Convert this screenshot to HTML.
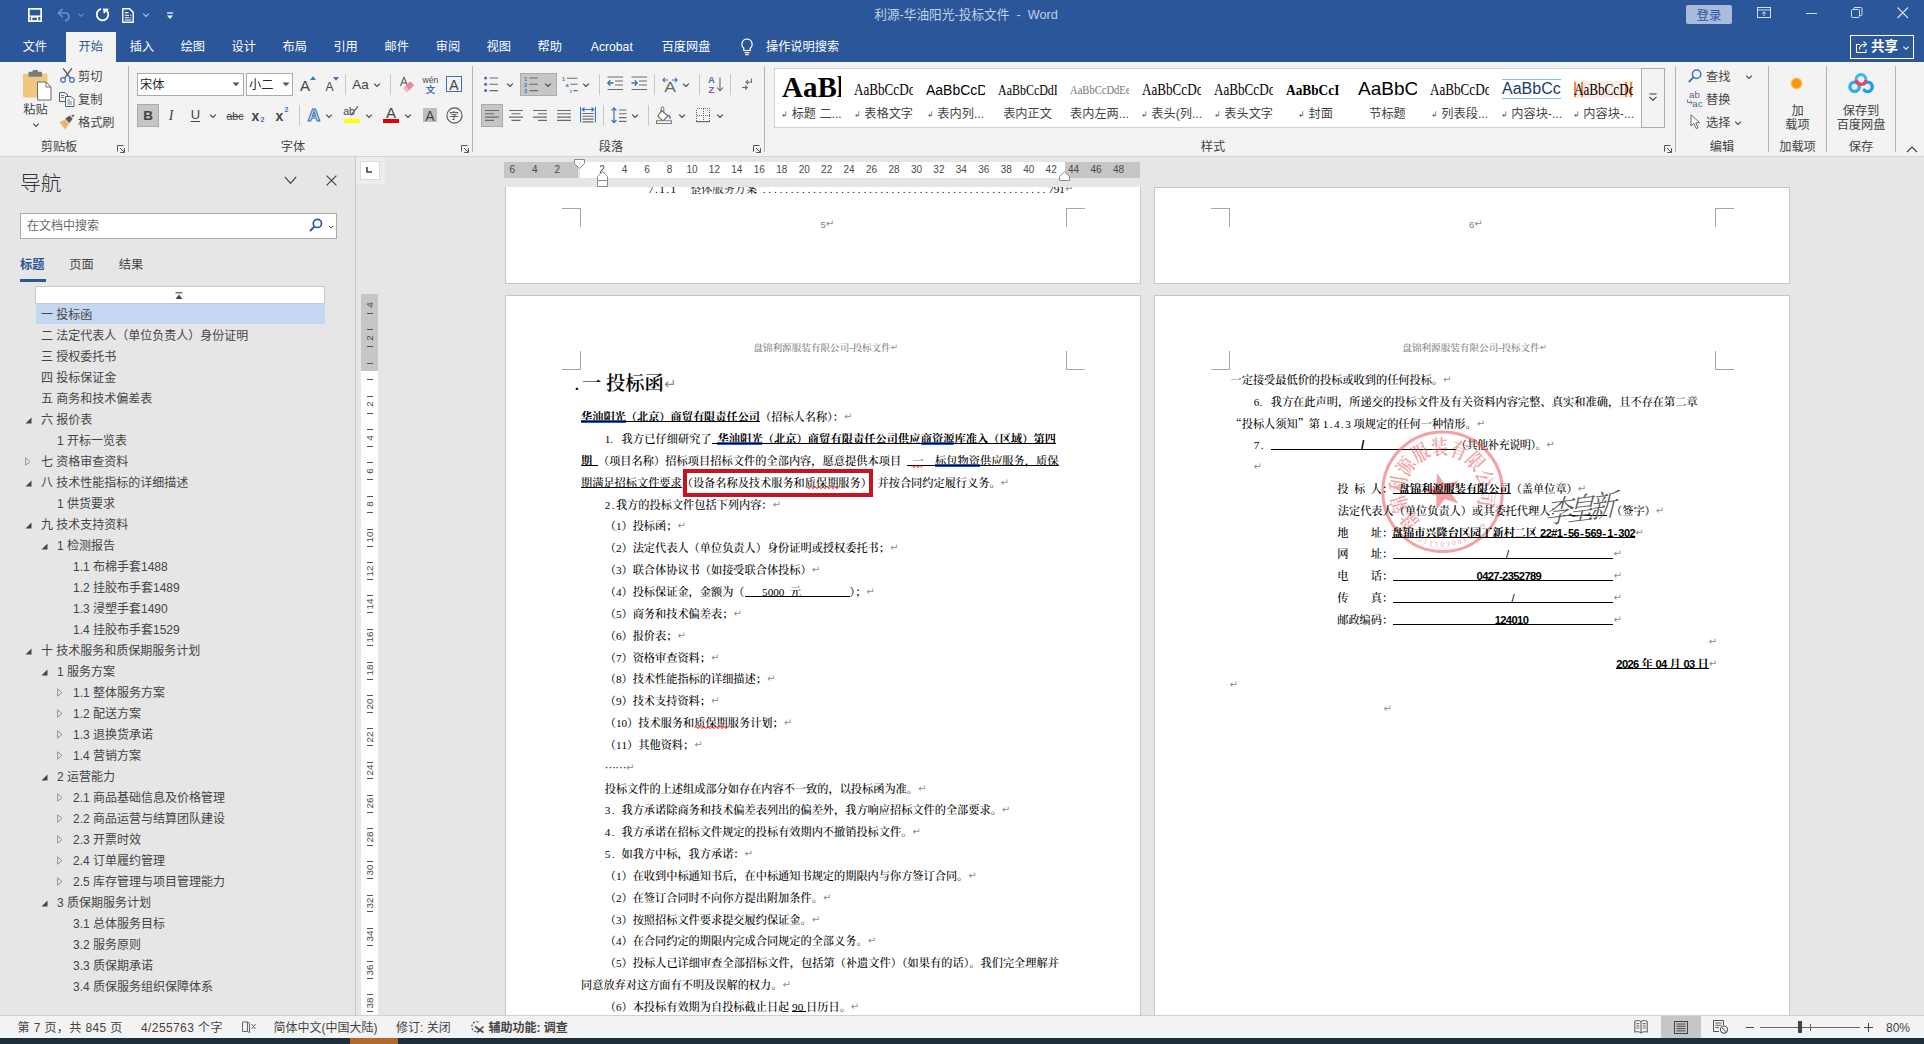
<!DOCTYPE html><html lang="zh-CN"><head><meta charset="utf-8"><title>Word</title><style>html,body{margin:0;padding:0}body{width:1924px;height:1044px;position:relative;overflow:hidden;background:#E6E6E6;font-family:"Liberation Sans","Noto Sans CJK SC",sans-serif;font-size:12px;color:#262626}div,svg,span.a{position:absolute}svg{overflow:visible}b{font-weight:700}.d{font-family:"Liberation Serif","Noto Serif CJK SC",serif}.u{background:linear-gradient(#000,#000) 0 10.2px/100% 1px no-repeat}.m{color:#8c8c8c;font-family:"DejaVu Sans",sans-serif;font-size:10px;letter-spacing:0;position:relative;top:-1.2px}</style></head><body><style>.uf{display:inline-block;box-sizing:border-box;height:16px;vertical-align:top;background:linear-gradient(#000,#000) 0 12px/100% 1px no-repeat}i{display:inline-block;width:5.6px;text-align:center;font-style:normal}</style>
<div style="left:0px;top:0px;width:1924px;height:62px;background:#2B579A;"></div>
<svg style="left:28px;top:7.8px;" width="14" height="14" viewBox="0 0 14 14"><rect x="0.85" y="0.85" width="12.3" height="12.3" fill="none" stroke="#FFFFFF" stroke-width="1.7"/><path d="M0.85 8.2 H13.15" stroke="#FFFFFF" stroke-width="1.5"/><rect x="3.6" y="8.9" width="6" height="4.3" fill="none" stroke="#FFFFFF" stroke-width="1.5"/></svg>
<svg style="left:56.5px;top:8px;" width="16" height="14" viewBox="0 0 16 14"><path d="M1.4 5 H9 A3.9 3.9 0 0 1 9 12.6 H8 M5.6 0.8 L1.4 5 L5.6 9.2" fill="none" stroke="#6E8DC0" stroke-width="1.7"/></svg>
<svg style="left:75.5px;top:10.5px;" width="10" height="8" viewBox="0 0 10 8"><path d="M2.4 2.7 L5 5.3 L7.6 2.7" fill="none" stroke="#6E8DC0" stroke-width="1.1"/></svg>
<svg style="left:95px;top:7px;" width="16" height="16" viewBox="0 0 16 16"><path d="M6.1 1.8 A5.8 5.8 0 1 0 11.6 3.3" fill="none" stroke="#FFFFFF" stroke-width="1.8"/><path d="M8.0 1.4 L14.0 1.8 L8.8 6.9 Z" fill="#FFFFFF"/></svg>
<svg style="left:121.5px;top:7.5px;" width="12" height="15" viewBox="0 0 12 15"><path d="M0.8 0.8 H7.6 L11.2 4.4 V14.2 H0.8 Z" fill="none" stroke="#FFFFFF" stroke-width="1.4"/><path d="M2.8 4.6 H6.4 M2.8 7.2 H7 M2.8 9.8 H7 M8.2 7.2 H9.4 M8.2 9.8 H9.4 M2.8 12 H9.4" stroke="#FFFFFF" stroke-width="1.1"/></svg>
<svg style="left:140.5px;top:10.5px;" width="10" height="8" viewBox="0 0 10 8"><path d="M2.2 2.6 L5 5.4 L7.8 2.6" fill="none" stroke="#B9C7E2" stroke-width="1.1"/></svg>
<svg style="left:166.5px;top:11.5px;" width="6" height="8" viewBox="0 0 6 8"><path d="M0 1 H6" stroke="#FFFFFF" stroke-width="1.2"/><path d="M0 3.6 H6 L3 7 Z" fill="#FFFFFF"/></svg>
<div style="top:4.50px;height:20px;line-height:20px;font-size:12.7px;color:#C4D0E6;white-space:pre;left:766px;width:400px;text-align:center;">利源-华油阳光-投标文件  -  Word</div>
<div style="left:1686px;top:5px;width:46px;height:19px;background:#A9BCDD;border-radius:2px;"></div>
<div style="top:5.60px;height:20px;line-height:20px;font-size:12.5px;color:#2B579A;white-space:pre;left:1509px;width:400px;text-align:center;">登录</div>
<svg style="left:1757px;top:7px;" width="14" height="12" viewBox="0 0 14 12"><rect x="0.5" y="0.5" width="13" height="10" fill="none" stroke="#D5DEEE" stroke-width="1"/><path d="M0.5 3 H13.5" stroke="#D5DEEE" stroke-width="1"/><path d="M7 9 V5 M5 6.8 L7 4.8 L9 6.8" fill="none" stroke="#D5DEEE" stroke-width="1"/></svg>
<div style="left:1806px;top:13px;width:11px;height:1px;background:#D5DEEE;"></div>
<svg style="left:1851px;top:7px;" width="12" height="12" viewBox="0 0 12 12"><rect x="0.5" y="2.5" width="8" height="8" rx="1.2" fill="none" stroke="#D5DEEE" stroke-width="1"/><path d="M2.8 2.5 V1.6 A1.1 1.1 0 0 1 3.9 0.5 H9.9 A1.1 1.1 0 0 1 11 1.6 V7.6 A1.1 1.1 0 0 1 9.9 8.7 H8.8" fill="none" stroke="#D5DEEE" stroke-width="1"/></svg>
<svg style="left:1897px;top:7px;" width="12" height="12" viewBox="0 0 12 12"><path d="M0.5 0.5 L11 11 M11 0.5 L0.5 11" stroke="#D5DEEE" stroke-width="1.1"/></svg>
<div style="left:66px;top:32px;width:50px;height:30px;background:#F3F3F3;"></div>
<div style="top:37.00px;height:20px;line-height:20px;font-size:12.2px;color:#FFFFFF;white-space:pre;left:-165.2px;width:400px;text-align:center;">文件</div>
<div style="top:37.00px;height:20px;line-height:20px;font-size:12.2px;color:#2B579A;white-space:pre;left:-109.3px;width:400px;text-align:center;">开始</div>
<div style="top:37.00px;height:20px;line-height:20px;font-size:12.2px;color:#FFFFFF;white-space:pre;left:-58.099999999999994px;width:400px;text-align:center;">插入</div>
<div style="top:37.00px;height:20px;line-height:20px;font-size:12.2px;color:#FFFFFF;white-space:pre;left:-7.199999999999989px;width:400px;text-align:center;">绘图</div>
<div style="top:37.00px;height:20px;line-height:20px;font-size:12.2px;color:#FFFFFF;white-space:pre;left:43.69999999999999px;width:400px;text-align:center;">设计</div>
<div style="top:37.00px;height:20px;line-height:20px;font-size:12.2px;color:#FFFFFF;white-space:pre;left:94.69999999999999px;width:400px;text-align:center;">布局</div>
<div style="top:37.00px;height:20px;line-height:20px;font-size:12.2px;color:#FFFFFF;white-space:pre;left:145.60000000000002px;width:400px;text-align:center;">引用</div>
<div style="top:37.00px;height:20px;line-height:20px;font-size:12.2px;color:#FFFFFF;white-space:pre;left:196.7px;width:400px;text-align:center;">邮件</div>
<div style="top:37.00px;height:20px;line-height:20px;font-size:12.2px;color:#FFFFFF;white-space:pre;left:247.89999999999998px;width:400px;text-align:center;">审阅</div>
<div style="top:37.00px;height:20px;line-height:20px;font-size:12.2px;color:#FFFFFF;white-space:pre;left:298.7px;width:400px;text-align:center;">视图</div>
<div style="top:37.00px;height:20px;line-height:20px;font-size:12.2px;color:#FFFFFF;white-space:pre;left:349.70000000000005px;width:400px;text-align:center;">帮助</div>
<div style="top:37.00px;height:20px;line-height:20px;font-size:12.2px;color:#FFFFFF;white-space:pre;left:411.79999999999995px;width:400px;text-align:center;">Acrobat</div>
<div style="top:37.00px;height:20px;line-height:20px;font-size:12.2px;color:#FFFFFF;white-space:pre;left:486px;width:400px;text-align:center;">百度网盘</div>
<svg style="left:740px;top:38px;" width="14" height="18" viewBox="0 0 14 18"><path d="M7 1 A5.2 5.2 0 0 1 10.2 10.2 V12.5 H3.8 V10.2 A5.2 5.2 0 0 1 7 1 Z" fill="none" stroke="#FFFFFF" stroke-width="1.2"/><path d="M4.5 14.6 H9.5 M5.3 16.6 H8.7" stroke="#FFFFFF" stroke-width="1.1"/></svg>
<div style="top:37.00px;height:20px;line-height:20px;font-size:12.2px;color:#FFFFFF;white-space:pre;left:766px;">操作说明搜索</div>
<div style="left:1850px;top:35px;width:64px;height:24px;border:1px solid #FFFFFF;box-sizing:border-box;"></div>
<svg style="left:1855px;top:40px;" width="14" height="14" viewBox="0 0 14 14"><path d="M5 4.5 H1.5 V12.5 H11 V9.5" fill="none" stroke="#FFF" stroke-width="1.1"/><path d="M4.5 9.5 C4.5 6 7 4.2 10.5 4.2 M8.5 1.5 L11.5 4.2 L8.5 7" fill="none" stroke="#FFF" stroke-width="1.1"/></svg>
<div style="top:36.50px;height:20px;line-height:20px;font-size:13.5px;color:#FFFFFF;white-space:pre;left:1871px;font-weight:700;">共享</div>
<svg style="left:1901px;top:43.5px;" width="10" height="8" viewBox="0 0 10 8"><path d="M2.4 2.7 L5 5.3 L7.6 2.7" fill="none" stroke="#FFFFFF" stroke-width="1.1"/></svg>
<div style="left:0px;top:62px;width:1924px;height:94px;background:#F3F3F3;"></div>
<div style="left:0px;top:156px;width:1924px;height:1px;background:#D4D4D4;"></div>
<svg style="left:23px;top:70px;" width="29" height="31" viewBox="0 0 29 31"><rect x="0" y="3.5" width="24.5" height="24" rx="1.5" fill="#EFC77F"/><rect x="5.5" y="1.8" width="13.5" height="5" rx="1" fill="#7A7A7A"/><rect x="9.5" y="0" width="5.5" height="3.5" rx="1.2" fill="#7A7A7A"/><path d="M14.5 12 H23 L28 17 V30 H14.5 Z" fill="#FFFFFF" stroke="#6A6A6A" stroke-width="1"/><path d="M23 12 V17 H28" fill="none" stroke="#6A6A6A" stroke-width="1"/></svg>
<div style="top:99.50px;height:20px;line-height:20px;font-size:12.2px;color:#444444;white-space:pre;left:-164.5px;width:400px;text-align:center;">粘贴</div>
<svg style="left:31px;top:120.5px;" width="10" height="8" viewBox="0 0 10 8"><path d="M2.2 2.6 L5 5.4 L7.8 2.6" fill="none" stroke="#444444" stroke-width="1.1"/></svg>
<svg style="left:60px;top:68px;" width="15" height="15" viewBox="0 0 15 15"><path d="M3.2 0.5 L10.6 10.4 M11.8 0.5 L4.4 10.4" stroke="#5A5A5A" stroke-width="1.3" fill="none"/><circle cx="3" cy="12" r="2.3" fill="none" stroke="#3B73B9" stroke-width="1.2"/><circle cx="12" cy="12" r="2.3" fill="none" stroke="#3B73B9" stroke-width="1.2"/></svg>
<div style="top:67.20px;height:20px;line-height:20px;font-size:12.2px;color:#444444;white-space:pre;left:78px;">剪切</div>
<svg style="left:59px;top:92px;" width="16" height="15" viewBox="0 0 16 15"><path d="M0.5 0.5 H6 L8.5 3 V9.5 H0.5 Z" fill="#F3F3F3" stroke="#5A5A5A" stroke-width="1"/><path d="M2 3.5 H5 M2 5.5 H5" stroke="#3B73B9" stroke-width="0.9"/><path d="M6.5 4.5 H12 L15 7.5 V14.5 H6.5 Z" fill="#FFFFFF" stroke="#5A5A5A" stroke-width="1"/><path d="M8.3 8 H11 M8.3 10 H13 M8.3 12 H13" stroke="#3B73B9" stroke-width="0.9"/></svg>
<div style="top:90.40px;height:20px;line-height:20px;font-size:12.2px;color:#444444;white-space:pre;left:78px;">复制</div>
<svg style="left:59px;top:114px;" width="17" height="16" viewBox="0 0 17 16"><path d="M0.5 8.2 L6.2 5.2 L10 10 L6 15.5 Z" fill="#E8B86A"/><path d="M6.3 4.6 L10.8 1.6 L13.6 5 L10.2 9.2 Z" fill="#5A5A5A"/><path d="M12.2 1.2 L15.4 0.4 L14.2 3.4 Z" fill="#5A5A5A"/></svg>
<div style="top:113.10px;height:20px;line-height:20px;font-size:12.2px;color:#444444;white-space:pre;left:78px;">格式刷</div>
<div style="top:136.60px;height:20px;line-height:20px;font-size:12.2px;color:#444444;white-space:pre;left:-141px;width:400px;text-align:center;">剪贴板</div>
<svg style="left:117px;top:144.5px;" width="8" height="8" viewBox="0 0 8 8"><path d="M0.5 6.5 V0.5 H6.5 M3 3 L7.4 7.4 M7.5 3.2 V7.5 H3.2" fill="none" stroke="#555" stroke-width="1"/></svg>
<div style="left:128px;top:66px;width:1px;height:86px;background:#B4B4B4;"></div>
<div style="left:137px;top:73px;width:107px;height:23px;background:#FFFFFF;border:1px solid #ABABAB;box-sizing:border-box;"></div>
<div style="top:74.80px;height:20px;line-height:20px;font-size:12.2px;color:#262626;white-space:pre;left:140px;">宋体</div>
<svg style="left:232px;top:82px;" width="8" height="5" viewBox="0 0 8 5"><path d="M0.5 0.5 H7.5 L4 4.2 Z" fill="#555"/></svg>
<div style="left:246px;top:73px;width:47px;height:23px;background:#FFFFFF;border:1px solid #ABABAB;box-sizing:border-box;"></div>
<div style="top:74.80px;height:20px;line-height:20px;font-size:12.2px;color:#262626;white-space:pre;left:249px;">小二</div>
<svg style="left:282px;top:82px;" width="8" height="5" viewBox="0 0 8 5"><path d="M0.5 0.5 H7.5 L4 4.2 Z" fill="#555"/></svg>
<div style="top:75.50px;height:20px;line-height:20px;font-size:15px;color:#444444;white-space:pre;left:105px;width:400px;text-align:center;">A</div>
<svg style="left:310px;top:76px;" width="6" height="4" viewBox="0 0 6 4"><path d="M0 4 L3 0.3 L6 4 Z" fill="#3B73B9"/></svg>
<div style="top:76.50px;height:20px;line-height:20px;font-size:12px;color:#444444;white-space:pre;left:129.5px;width:400px;text-align:center;">A</div>
<svg style="left:333px;top:77px;" width="6" height="4" viewBox="0 0 6 4"><path d="M0 0 L3 3.7 L6 0 Z" fill="#3B73B9"/></svg>
<div style="left:345px;top:74px;width:1px;height:21px;background:#C8C8C8;"></div>
<div style="top:74.50px;height:20px;line-height:20px;font-size:13.5px;color:#444444;white-space:pre;left:160.5px;width:400px;text-align:center;">Aa</div>
<svg style="left:371.5px;top:81px;" width="10" height="8" viewBox="0 0 10 8"><path d="M2.2 2.6 L5 5.4 L7.8 2.6" fill="none" stroke="#444444" stroke-width="1.1"/></svg>
<div style="left:390px;top:74px;width:1px;height:21px;background:#C8C8C8;"></div>
<svg style="left:398px;top:75px;" width="18" height="18" viewBox="0 0 18 18"><path d="M6 2 L2.5 11 M6 2 L9.5 11 M3.8 7.8 H8.2" fill="none" stroke="#6A6A6A" stroke-width="1.2"/><path d="M7.2 11.2 L12.2 6.2 L16.2 10.2 L11.2 15.2 Z" fill="#E98A9C"/><path d="M5 13.4 L7.2 11.2 L11.2 15.2 L9 17.4 Z" fill="#F2B3BE"/></svg>
<div style="top:73.80px;height:12px;line-height:12px;font-size:8.6px;color:#444444;white-space:pre;left:230.5px;width:400px;text-align:center;">wén</div>
<div style="top:83.50px;height:12px;line-height:12px;font-size:9.5px;color:#3B73B9;white-space:pre;left:230.5px;width:400px;text-align:center;font-weight:700;">文</div>
<div style="left:446px;top:76px;width:16px;height:16px;border:1px solid #3B73B9;box-sizing:border-box;"></div>
<div style="top:74.50px;height:20px;line-height:20px;font-size:14px;color:#444444;white-space:pre;left:254px;width:400px;text-align:center;">A</div>
<div style="left:137px;top:104px;width:22px;height:23px;background:#C6C6C6;border:1px solid #ABABAB;box-sizing:border-box;"></div>
<div style="top:105.50px;height:20px;line-height:20px;font-size:13.5px;color:#444444;white-space:pre;left:-52px;width:400px;text-align:center;font-weight:700;">B</div>
<div style="top:105.50px;height:20px;line-height:20px;font-size:14px;color:#444444;white-space:pre;font-family:'Liberation Serif',serif;left:-29px;width:400px;text-align:center;font-style:italic;">I</div>
<div style="top:105.00px;height:20px;line-height:20px;font-size:13px;color:#444444;white-space:pre;left:-4.599999999999994px;width:400px;text-align:center;text-decoration:underline;text-underline-offset:2px;">U</div>
<svg style="left:208.3px;top:112px;" width="10" height="8" viewBox="0 0 10 8"><path d="M2.2 2.6 L5 5.4 L7.8 2.6" fill="none" stroke="#444444" stroke-width="1.1"/></svg>
<div style="top:106.00px;height:20px;line-height:20px;font-size:10.5px;color:#444444;white-space:pre;left:35px;width:400px;text-align:center;text-decoration:line-through;">abc</div>
<div style="top:105.50px;height:20px;line-height:20px;font-size:14px;color:#444444;white-space:pre;left:55.5px;width:400px;text-align:center;font-weight:700;">x</div>
<div style="top:110.00px;height:20px;line-height:20px;font-size:7px;color:#3B73B9;white-space:pre;left:62.5px;width:400px;text-align:center;font-weight:700;">2</div>
<div style="top:105.50px;height:20px;line-height:20px;font-size:14px;color:#444444;white-space:pre;left:79.5px;width:400px;text-align:center;font-weight:700;">x</div>
<div style="top:100.00px;height:20px;line-height:20px;font-size:7px;color:#3B73B9;white-space:pre;left:86.5px;width:400px;text-align:center;font-weight:700;">2</div>
<div style="left:299px;top:105px;width:1px;height:21px;background:#C8C8C8;"></div>
<div style="top:105.50px;height:20px;line-height:20px;font-size:17px;color:#FFFFFF;white-space:pre;left:113.80000000000001px;width:400px;text-align:center;-webkit-text-stroke:1.2px #3B73B9;font-weight:700;">A</div>
<svg style="left:324.4px;top:112px;" width="10" height="8" viewBox="0 0 10 8"><path d="M2.2 2.6 L5 5.4 L7.8 2.6" fill="none" stroke="#444444" stroke-width="1.1"/></svg>
<div style="top:104.50px;height:12px;line-height:12px;font-size:10.5px;color:#444444;white-space:pre;left:149px;width:400px;text-align:center;">ab</div>
<svg style="left:349px;top:106px;" width="11" height="12" viewBox="0 0 11 12"><path d="M9.5 0.8 L3.6 8.2 L1.6 10.4 L2.4 7.4 L8.3 0 Z" fill="#6A6A6A"/></svg>
<div style="left:344px;top:119px;width:16px;height:4px;background:#FFFF00;"></div>
<svg style="left:364.3px;top:112px;" width="10" height="8" viewBox="0 0 10 8"><path d="M2.2 2.6 L5 5.4 L7.8 2.6" fill="none" stroke="#444444" stroke-width="1.1"/></svg>
<div style="top:102.50px;height:20px;line-height:20px;font-size:15px;color:#444444;white-space:pre;left:191px;width:400px;text-align:center;">A</div>
<div style="left:383px;top:119px;width:16px;height:4px;background:#E60000;"></div>
<svg style="left:403.4px;top:112px;" width="10" height="8" viewBox="0 0 10 8"><path d="M2.2 2.6 L5 5.4 L7.8 2.6" fill="none" stroke="#444444" stroke-width="1.1"/></svg>
<div style="left:423px;top:108px;width:14px;height:14px;background:#BFBFBF;"></div>
<div style="top:105.50px;height:20px;line-height:20px;font-size:14px;color:#444444;white-space:pre;left:230px;width:400px;text-align:center;">A</div>
<svg style="left:445.5px;top:107px;" width="17" height="17" viewBox="0 0 17 17"><circle cx="8.5" cy="8.5" r="7.6" fill="none" stroke="#555" stroke-width="1.1"/></svg>
<div style="top:105.50px;height:20px;line-height:20px;font-size:9.5px;color:#444444;white-space:pre;left:254px;width:400px;text-align:center;">字</div>
<div style="top:136.60px;height:20px;line-height:20px;font-size:12.2px;color:#444444;white-space:pre;left:93px;width:400px;text-align:center;">字体</div>
<svg style="left:461px;top:144.5px;" width="8" height="8" viewBox="0 0 8 8"><path d="M0.5 6.5 V0.5 H6.5 M3 3 L7.4 7.4 M7.5 3.2 V7.5 H3.2" fill="none" stroke="#555" stroke-width="1"/></svg>
<div style="left:472px;top:66px;width:1px;height:86px;background:#B4B4B4;"></div>
<svg style="left:484px;top:76px;" width="15" height="17" viewBox="0 0 15 17"><circle cx="1.6" cy="2" r="1.5" fill="#3B73B9"/><circle cx="1.6" cy="8.3" r="1.5" fill="#3B73B9"/><circle cx="1.6" cy="14.6" r="1.5" fill="#3B73B9"/><path d="M5.5 2 H14 M5.5 8.3 H14 M5.5 14.6 H14" stroke="#6A6A6A" stroke-width="1.1"/></svg>
<svg style="left:504.5px;top:81px;" width="10" height="8" viewBox="0 0 10 8"><path d="M2.2 2.6 L5 5.4 L7.8 2.6" fill="none" stroke="#444444" stroke-width="1.1"/></svg>
<div style="left:520px;top:73px;width:37px;height:23px;background:#C6C6C6;border:1px solid #ABABAB;box-sizing:border-box;"></div>
<svg style="left:524px;top:76px;" width="15" height="17" viewBox="0 0 15 17"><path d="M5.5 2 H14 M5.5 8.3 H14 M5.5 14.6 H14" stroke="#6A6A6A" stroke-width="1.1"/><text x="0" y="4.5" font-size="5.5" font-weight="700" fill="#3B73B9" font-family="Liberation Sans,sans-serif">1</text><text x="0" y="10.8" font-size="5.5" font-weight="700" fill="#3B73B9" font-family="Liberation Sans,sans-serif">2</text><text x="0" y="17" font-size="5.5" font-weight="700" fill="#3B73B9" font-family="Liberation Sans,sans-serif">3</text></svg>
<svg style="left:543.3px;top:81px;" width="10" height="8" viewBox="0 0 10 8"><path d="M2.2 2.6 L5 5.4 L7.8 2.6" fill="none" stroke="#444444" stroke-width="1.1"/></svg>
<svg style="left:562px;top:76px;" width="17" height="17" viewBox="0 0 17 17"><path d="M5 2.2 H15.5 M8.5 8.3 H15.5 M11.5 14.6 H15.5" stroke="#6A6A6A" stroke-width="1.1"/><text x="0" y="4.5" font-size="5.5" font-weight="700" fill="#3B73B9" font-family="Liberation Sans,sans-serif">1</text><text x="3.5" y="10.6" font-size="5.5" font-weight="700" fill="#3B73B9" font-family="Liberation Sans,sans-serif">a</text><text x="8" y="17" font-size="5.5" font-weight="700" fill="#3B73B9" font-family="Liberation Sans,sans-serif">i</text></svg>
<svg style="left:580.6px;top:81px;" width="10" height="8" viewBox="0 0 10 8"><path d="M2.2 2.6 L5 5.4 L7.8 2.6" fill="none" stroke="#444444" stroke-width="1.1"/></svg>
<div style="left:599px;top:74px;width:1px;height:21px;background:#C8C8C8;"></div>
<svg style="left:607px;top:76px;" width="17" height="15" viewBox="0 0 17 15"><path d="M0.5 1 H16 M8 5 H16 M8 9 H16 M0.5 13.5 H16" stroke="#6A6A6A" stroke-width="1.1"/><path d="M6.5 7 H0.8 M3.3 4.3 L0.8 7 L3.3 9.7" fill="none" stroke="#3B73B9" stroke-width="1.3"/></svg>
<svg style="left:631px;top:76px;" width="17" height="15" viewBox="0 0 17 15"><path d="M0.5 1 H16 M8 5 H16 M8 9 H16 M0.5 13.5 H16" stroke="#6A6A6A" stroke-width="1.1"/><path d="M0.5 7 H6.2 M3.7 4.3 L6.2 7 L3.7 9.7" fill="none" stroke="#3B73B9" stroke-width="1.3"/></svg>
<div style="left:654px;top:74px;width:1px;height:21px;background:#C8C8C8;"></div>
<div style="top:77.00px;height:20px;line-height:20px;font-size:14px;color:#6A6A6A;white-space:pre;left:469.79999999999995px;width:400px;text-align:center;transform:scaleX(1.25);">A</div>
<svg style="left:662px;top:77px;" width="16" height="6" viewBox="0 0 16 6"><path d="M1 3 H6 M3 0.8 L0.8 3 L3 5.2 M10 3 H15 M13 0.8 L15.2 3 L13 5.2" fill="none" stroke="#3B73B9" stroke-width="1.1"/></svg>
<svg style="left:680.6px;top:81px;" width="10" height="8" viewBox="0 0 10 8"><path d="M2.2 2.6 L5 5.4 L7.8 2.6" fill="none" stroke="#444444" stroke-width="1.1"/></svg>
<div style="left:699px;top:74px;width:1px;height:21px;background:#C8C8C8;"></div>
<div style="top:75.00px;height:10px;line-height:10px;font-size:9.5px;color:#3B73B9;white-space:pre;left:511.5px;width:400px;text-align:center;font-weight:700;">A</div>
<div style="top:84.50px;height:10px;line-height:10px;font-size:9.5px;color:#9B4DB8;white-space:pre;left:511.5px;width:400px;text-align:center;font-weight:700;">Z</div>
<svg style="left:716px;top:77px;" width="8" height="15" viewBox="0 0 8 15"><path d="M4 0.5 V13.5 M1 10.5 L4 13.8 L7 10.5" fill="none" stroke="#6A6A6A" stroke-width="1.1"/></svg>
<div style="left:730px;top:74px;width:1px;height:21px;background:#C8C8C8;"></div>
<svg style="left:741px;top:78px;" width="12" height="13" viewBox="0 0 12 13"><path d="M10.5 0.5 V4.2 H5 M7 2.2 L5 4.2 L7 6.2" fill="none" stroke="#6A6A6A" stroke-width="1.1"/><path d="M1 9.5 H6 M4.2 7.5 L6.2 9.5 L4.2 11.5" fill="none" stroke="#6A6A6A" stroke-width="1.1"/></svg>
<div style="left:481px;top:104px;width:22px;height:23px;background:#C6C6C6;border:1px solid #ABABAB;box-sizing:border-box;"></div>
<svg style="left:485px;top:110px;" width="16" height="12" viewBox="0 0 16 12"><path d="M0 0.5 H14 M0 3.8 H9 M0 7.1 H14 M0 10.4 H9 " stroke="#6A6A6A" stroke-width="1.1"/></svg>
<svg style="left:509px;top:110px;" width="16" height="12" viewBox="0 0 16 12"><path d="M0 0.5 H14 M2.5 3.8 H11.5 M0 7.1 H14 M2.5 10.4 H11.5 " stroke="#6A6A6A" stroke-width="1.1"/></svg>
<svg style="left:533px;top:110px;" width="16" height="12" viewBox="0 0 16 12"><path d="M0 0.5 H14 M5 3.8 H14 M0 7.1 H14 M5 10.4 H14 " stroke="#6A6A6A" stroke-width="1.1"/></svg>
<svg style="left:557px;top:110px;" width="16" height="12" viewBox="0 0 16 12"><path d="M0 0.5 H14 M0 3.8 H14 M0 7.1 H14 M0 10.4 H14 " stroke="#6A6A6A" stroke-width="1.1"/></svg>
<svg style="left:580px;top:107px;" width="16" height="16" viewBox="0 0 16 16"><path d="M0.6 0 V15.5 M15.4 0 V15.5" stroke="#3B73B9" stroke-width="1.1"/><path d="M2.5 2.5 H13.5 M4.5 0.5 L2.3 2.5 L4.5 4.5 M11.5 0.5 L13.7 2.5 L11.5 4.5" fill="none" stroke="#3B73B9" stroke-width="1.1"/><path d="M2.5 6.5 H13.5 M2.5 9.3 H13.5 M2.5 12.1 H13.5 M2.5 14.9 H13.5" stroke="#6A6A6A" stroke-width="1.1"/></svg>
<div style="left:603px;top:105px;width:1px;height:21px;background:#C8C8C8;"></div>
<svg style="left:611px;top:107px;" width="16" height="17" viewBox="0 0 16 17"><path d="M3 1 V15.5 M0.6 3.6 L3 0.8 L5.4 3.6 M0.6 13 L3 15.8 L5.4 13" fill="none" stroke="#3B73B9" stroke-width="1.2"/><path d="M8 3 H15.5 M8 6.8 H15.5 M8 10.6 H15.5 M8 14.4 H15.5" stroke="#6A6A6A" stroke-width="1.1"/></svg>
<svg style="left:629.5px;top:112px;" width="10" height="8" viewBox="0 0 10 8"><path d="M2.2 2.6 L5 5.4 L7.8 2.6" fill="none" stroke="#444444" stroke-width="1.1"/></svg>
<div style="left:648px;top:105px;width:1px;height:21px;background:#C8C8C8;"></div>
<svg style="left:656px;top:107px;" width="17" height="17" viewBox="0 0 17 17"><path d="M5.5 3.5 L12 9 L7 14 L1.8 9.2 Z" fill="#FFFFFF" stroke="#6A6A6A" stroke-width="1.1"/><path d="M5.2 5.5 V1.2 A1.3 1.3 0 0 1 7.8 1.2 V4.8" fill="none" stroke="#6A6A6A" stroke-width="1"/><path d="M12.2 7.2 C14.6 8.2 15.4 10.4 14.2 12.4 C13.2 10.8 12.6 9.6 12.2 7.2 Z" fill="#3B73B9"/><rect x="0.5" y="13.8" width="15" height="2.7" fill="#FFFFFF" stroke="#6A6A6A" stroke-width="0.9"/></svg>
<svg style="left:676.5px;top:112px;" width="10" height="8" viewBox="0 0 10 8"><path d="M2.2 2.6 L5 5.4 L7.8 2.6" fill="none" stroke="#444444" stroke-width="1.1"/></svg>
<svg style="left:696px;top:108px;" width="14" height="14" viewBox="0 0 14 14"><path d="M0.5 0.5 H13.5 V13.5 H0.5 Z M7 0.5 V13.5 M0.5 7 H13.5" fill="none" stroke="#6A6A6A" stroke-width="1" stroke-dasharray="1 1" shape-rendering="crispEdges"/><path d="M0 13.6 H14" stroke="#6A6A6A" stroke-width="1.2"/></svg>
<svg style="left:715.2px;top:112px;" width="10" height="8" viewBox="0 0 10 8"><path d="M2.2 2.6 L5 5.4 L7.8 2.6" fill="none" stroke="#444444" stroke-width="1.1"/></svg>
<div style="top:136.60px;height:20px;line-height:20px;font-size:12.2px;color:#444444;white-space:pre;left:411px;width:400px;text-align:center;">段落</div>
<svg style="left:753px;top:144.5px;" width="8" height="8" viewBox="0 0 8 8"><path d="M0.5 6.5 V0.5 H6.5 M3 3 L7.4 7.4 M7.5 3.2 V7.5 H3.2" fill="none" stroke="#555" stroke-width="1"/></svg>
<div style="left:764px;top:66px;width:1px;height:86px;background:#B4B4B4;"></div>
<div style="left:774px;top:68px;width:868px;height:60px;background:#FFFFFF;border:1px solid #D0D0D0;box-sizing:border-box;"></div>
<div style="left:1641px;top:68px;width:24px;height:60px;background:#F3F3F3;border:1px solid #ABABAB;box-sizing:border-box;"></div>
<svg style="left:1648px;top:93px;" width="10" height="9" viewBox="0 0 10 9"><path d="M1.5 1 H8.5" stroke="#444444" stroke-width="1.1"/><path d="M1.5 3.8 L5 7.4 L8.5 3.8" fill="none" stroke="#444444" stroke-width="1.1"/></svg>
<div style="left:782px;top:70px;width:59px;height:34px;overflow:hidden;"><div style="left:0;top:5px;height:24px;line-height:24px;white-space:pre;transform-origin:0 50%;font-size:29px;color:#000;font-family:'Liberation Serif',serif;font-weight:700;">AaBl</div></div>
<div style="left:776px;top:103.6px;width:71px;height:20px;line-height:20px;text-align:center;white-space:pre;font-size:12.2px;color:#444444"><span style="font-size:8px;color:#555;position:relative;top:-0.5px">↲</span> 标题 二...</div>
<div style="left:854px;top:70px;width:59px;height:34px;overflow:hidden;"><div style="left:0;top:7.5px;height:24px;line-height:24px;white-space:pre;transform-origin:0 50%;font-size:16px;color:#000;font-family:'Liberation Serif','Noto Serif CJK SC',serif;transform:scaleX(.82);">AaBbCcDc</div></div>
<div style="left:848px;top:103.6px;width:71px;height:20px;line-height:20px;text-align:center;white-space:pre;font-size:12.2px;color:#444444"><span style="font-size:8px;color:#555;position:relative;top:-0.5px">↲</span> 表格文字</div>
<div style="left:926px;top:70px;width:59px;height:34px;overflow:hidden;"><div style="left:0;top:8px;height:24px;line-height:24px;white-space:pre;transform-origin:0 50%;font-size:14px;color:#000;font-family:'Liberation Sans','Noto Sans CJK SC',sans-serif;">AaBbCcD</div></div>
<div style="left:920px;top:103.6px;width:71px;height:20px;line-height:20px;text-align:center;white-space:pre;font-size:12.2px;color:#444444"><span style="font-size:8px;color:#555;position:relative;top:-0.5px">↲</span> 表内列...</div>
<div style="left:998px;top:70px;width:59px;height:34px;overflow:hidden;"><div style="left:0;top:7.5px;height:24px;line-height:24px;white-space:pre;transform-origin:0 50%;font-size:14.6px;color:#000;font-family:'Liberation Serif','Noto Serif CJK SC',serif;transform:scaleX(.82);font-weight:500;">AaBbCcDdI</div></div>
<div style="left:992px;top:103.6px;width:71px;height:20px;line-height:20px;text-align:center;white-space:pre;font-size:12.2px;color:#444444">表内正文</div>
<div style="left:1070px;top:70px;width:59px;height:34px;overflow:hidden;"><div style="left:0;top:8px;height:24px;line-height:24px;white-space:pre;transform-origin:0 50%;font-size:11.5px;color:#777;font-family:'Liberation Serif',serif;transform:scaleX(.92);">AaBbCcDdEe</div></div>
<div style="left:1064px;top:103.6px;width:71px;height:20px;line-height:20px;text-align:center;white-space:pre;font-size:12.2px;color:#444444">表内左两...</div>
<div style="left:1142px;top:70px;width:59px;height:34px;overflow:hidden;"><div style="left:0;top:7.5px;height:24px;line-height:24px;white-space:pre;transform-origin:0 50%;font-size:16px;color:#000;font-family:'Liberation Serif','Noto Serif CJK SC',serif;transform:scaleX(.82);">AaBbCcDc</div></div>
<div style="left:1136px;top:103.6px;width:71px;height:20px;line-height:20px;text-align:center;white-space:pre;font-size:12.2px;color:#444444"><span style="font-size:8px;color:#555;position:relative;top:-0.5px">↲</span> 表头(列...</div>
<div style="left:1214px;top:70px;width:59px;height:34px;overflow:hidden;"><div style="left:0;top:7.5px;height:24px;line-height:24px;white-space:pre;transform-origin:0 50%;font-size:16px;color:#000;font-family:'Liberation Serif','Noto Serif CJK SC',serif;transform:scaleX(.82);">AaBbCcDc</div></div>
<div style="left:1208px;top:103.6px;width:71px;height:20px;line-height:20px;text-align:center;white-space:pre;font-size:12.2px;color:#444444"><span style="font-size:8px;color:#555;position:relative;top:-0.5px">↲</span> 表头文字</div>
<div style="left:1286px;top:70px;width:59px;height:34px;overflow:hidden;"><div style="left:0;top:7.5px;height:24px;line-height:24px;white-space:pre;transform-origin:0 50%;font-size:15.5px;color:#000;font-family:'Liberation Serif','Noto Serif CJK SC',serif;font-weight:700;transform:scaleX(.86);">AaBbCcI</div></div>
<div style="left:1280px;top:103.6px;width:71px;height:20px;line-height:20px;text-align:center;white-space:pre;font-size:12.2px;color:#444444"><span style="font-size:8px;color:#555;position:relative;top:-0.5px">↲</span> 封面</div>
<div style="left:1358px;top:70px;width:59px;height:34px;overflow:hidden;"><div style="left:0;top:6.5px;height:24px;line-height:24px;white-space:pre;transform-origin:0 50%;font-size:19px;color:#000;font-family:'Liberation Sans','Noto Sans CJK SC',sans-serif;">AaBbC</div></div>
<div style="left:1352px;top:103.6px;width:71px;height:20px;line-height:20px;text-align:center;white-space:pre;font-size:12.2px;color:#444444">节标题</div>
<div style="left:1430px;top:70px;width:59px;height:34px;overflow:hidden;"><div style="left:0;top:7.5px;height:24px;line-height:24px;white-space:pre;transform-origin:0 50%;font-size:16px;color:#000;font-family:'Liberation Serif','Noto Serif CJK SC',serif;transform:scaleX(.82);">AaBbCcDc</div></div>
<div style="left:1424px;top:103.6px;width:71px;height:20px;line-height:20px;text-align:center;white-space:pre;font-size:12.2px;color:#444444"><span style="font-size:8px;color:#555;position:relative;top:-0.5px">↲</span> 列表段...</div>
<div style="left:1502px;top:79px;width:59px;height:1px;background:#7FC4E8;"></div>
<div style="left:1502px;top:98px;width:59px;height:1px;background:#7FC4E8;"></div>
<div style="left:1502px;top:70px;width:59px;height:34px;overflow:hidden;"><div style="left:0;top:7px;height:24px;line-height:24px;white-space:pre;transform-origin:0 50%;font-size:16px;color:#1B3A6B;font-family:'Liberation Sans','Noto Sans CJK SC',sans-serif;">AaBbCc</div></div>
<div style="left:1496px;top:103.6px;width:71px;height:20px;line-height:20px;text-align:center;white-space:pre;font-size:12.2px;color:#444444"><span style="font-size:8px;color:#555;position:relative;top:-0.5px">↲</span> 内容块-...</div>
<div style="left:1574px;top:81px;width:59px;height:17px;background:#FDECE6;"></div>
<div style="left:1574px;top:82px;width:2px;height:15px;background:#F08A4B;"></div>
<div style="left:1581px;top:82px;width:2px;height:15px;background:#F08A4B;"></div>
<div style="left:1625px;top:82px;width:2px;height:15px;background:#F08A4B;"></div>
<div style="left:1630px;top:82px;width:2px;height:15px;background:#F08A4B;"></div>
<div style="left:1574px;top:70px;width:59px;height:34px;overflow:hidden;"><div style="left:0;top:7.5px;height:24px;line-height:24px;white-space:pre;transform-origin:0 50%;font-size:16px;color:#000;font-family:'Liberation Serif','Noto Serif CJK SC',serif;transform:scaleX(.82);">AaBbCcDc</div></div>
<div style="left:1568px;top:103.6px;width:71px;height:20px;line-height:20px;text-align:center;white-space:pre;font-size:12.2px;color:#444444"><span style="font-size:8px;color:#555;position:relative;top:-0.5px">↲</span> 内容块-...</div>
<div style="top:136.60px;height:20px;line-height:20px;font-size:12.2px;color:#444444;white-space:pre;left:1013px;width:400px;text-align:center;">样式</div>
<svg style="left:1664px;top:144.5px;" width="8" height="8" viewBox="0 0 8 8"><path d="M0.5 6.5 V0.5 H6.5 M3 3 L7.4 7.4 M7.5 3.2 V7.5 H3.2" fill="none" stroke="#555" stroke-width="1"/></svg>
<div style="left:1675px;top:66px;width:1px;height:86px;background:#B4B4B4;"></div>
<svg style="left:1688px;top:69px;" width="14" height="14" viewBox="0 0 14 14"><circle cx="8.6" cy="5.2" r="4.2" fill="none" stroke="#3B73B9" stroke-width="1.5"/><path d="M5.6 8.2 L0.8 13" stroke="#3B73B9" stroke-width="1.8"/></svg>
<div style="top:67.40px;height:20px;line-height:20px;font-size:12.2px;color:#444444;white-space:pre;left:1706px;">查找</div>
<svg style="left:1743.7px;top:73px;" width="10" height="8" viewBox="0 0 10 8"><path d="M2.2 2.6 L5 5.4 L7.8 2.6" fill="none" stroke="#444444" stroke-width="1.1"/></svg>
<div style="top:90.00px;height:10px;line-height:10px;font-size:9.8px;color:#8A4FB0;white-space:pre;left:1494.5px;width:400px;text-align:center;"><span style="color:#666">a</span>b</div>
<div style="top:99.00px;height:10px;line-height:10px;font-size:9.8px;color:#3B73B9;white-space:pre;left:1497.5px;width:400px;text-align:center;"><span style="color:#666">a</span>c</div>
<svg style="left:1687px;top:99px;" width="6" height="6" viewBox="0 0 6 6"><path d="M0.6 0.5 V3.5 H5 M3.4 1.8 L5.2 3.5 L3.4 5.2" fill="none" stroke="#3B73B9" stroke-width="0.9"/></svg>
<div style="top:90.40px;height:20px;line-height:20px;font-size:12.2px;color:#444444;white-space:pre;left:1706px;">替换</div>
<svg style="left:1690px;top:114px;" width="11" height="16" viewBox="0 0 11 16"><path d="M1 0.8 L1 12 L4 9.4 L6.2 14.6 L8 13.8 L5.8 8.8 L9.6 8.6 Z" fill="#FFFFFF" stroke="#6A6A6A" stroke-width="1"/></svg>
<div style="top:113.40px;height:20px;line-height:20px;font-size:12.2px;color:#444444;white-space:pre;left:1706px;">选择</div>
<svg style="left:1733px;top:119px;" width="10" height="8" viewBox="0 0 10 8"><path d="M2.2 2.6 L5 5.4 L7.8 2.6" fill="none" stroke="#444444" stroke-width="1.1"/></svg>
<div style="top:136.60px;height:20px;line-height:20px;font-size:12.2px;color:#444444;white-space:pre;left:1522px;width:400px;text-align:center;">编辑</div>
<div style="left:1768px;top:66px;width:1px;height:86px;background:#B4B4B4;"></div>
<svg style="left:1788.4px;top:74.5px;" width="17" height="17" viewBox="0 0 17 17"><circle cx="8.5" cy="8.5" r="6.2" fill="#FF9500" opacity="0.22"/><circle cx="8.5" cy="8.5" r="5.5" fill="#FF9500" opacity="0.45"/><circle cx="8.5" cy="8.5" r="4.7" fill="#FF9500"/></svg>
<div style="top:100.60px;height:20px;line-height:20px;font-size:12.2px;color:#444444;white-space:pre;left:1597.5px;width:400px;text-align:center;">加</div>
<div style="top:115.20px;height:20px;line-height:20px;font-size:12.2px;color:#444444;white-space:pre;left:1597.5px;width:400px;text-align:center;">载项</div>
<div style="top:136.60px;height:20px;line-height:20px;font-size:12.2px;color:#444444;white-space:pre;left:1597.5px;width:400px;text-align:center;">加载项</div>
<div style="left:1826px;top:66px;width:1px;height:86px;background:#B4B4B4;"></div>
<svg style="left:1847px;top:71px;" width="28" height="24" viewBox="0 0 28 24"><circle cx="7.6" cy="15.8" r="4.7" fill="none" stroke="#2AAEF5" stroke-width="3.4"/><path d="M17.2 19.1 A4.7 4.7 0 1 0 17.0 12.8" fill="none" stroke="#1E9BF2" stroke-width="3.4" stroke-linecap="round"/><path d="M10.2 12.6 L12.4 10.6" stroke="#2AAEF5" stroke-width="3.4"/><path d="M9.15 8.5 A4.85 4.85 0 0 1 18.85 8.5" fill="none" stroke="#28BDFA" stroke-width="3.1"/><path d="M9.15 8.5 A4.85 4.85 0 0 0 18.85 8.5" fill="none" stroke="#F0405F" stroke-width="3.1"/></svg>
<div style="top:100.60px;height:20px;line-height:20px;font-size:12.2px;color:#444444;white-space:pre;left:1661px;width:400px;text-align:center;">保存到</div>
<div style="top:115.20px;height:20px;line-height:20px;font-size:12.2px;color:#444444;white-space:pre;left:1661px;width:400px;text-align:center;">百度网盘</div>
<div style="top:136.60px;height:20px;line-height:20px;font-size:12.2px;color:#444444;white-space:pre;left:1661px;width:400px;text-align:center;">保存</div>
<div style="left:1895px;top:66px;width:1px;height:86px;background:#B4B4B4;"></div>
<svg style="left:1906px;top:146px;" width="12" height="7" viewBox="0 0 12 7"><path d="M1 6 L6 1 L11 6" fill="none" stroke="#444444" stroke-width="1.2"/></svg>
<div style="left:505px;top:176px;width:636px;height:108px;background:#FFFFFF;border:1px solid #C6C6C6;box-sizing:border-box;"></div>
<div style="left:1154px;top:187px;width:636px;height:97px;background:#FFFFFF;border:1px solid #C6C6C6;box-sizing:border-box;"></div>
<div style="left:505px;top:295px;width:636px;height:730px;background:#FFFFFF;border:1px solid #C6C6C6;box-sizing:border-box;"></div>
<div style="left:1154px;top:295px;width:636px;height:730px;background:#FFFFFF;border:1px solid #C6C6C6;box-sizing:border-box;"></div>
<div style="left:356px;top:157px;width:1568px;height:30px;background:#E6E6E6;"></div>
<div style="left:356px;top:157px;width:29px;height:27px;background:#EDEDED;"></div>
<div style="left:360px;top:161px;width:20px;height:19px;background:#FFFFFF;border:1px solid #DADADA;box-sizing:border-box;"></div>
<svg style="left:366px;top:167px;" width="6" height="6" viewBox="0 0 6 6"><path d="M1 0 V5 H6" fill="none" stroke="#444" stroke-width="1.6"/></svg>
<div style="left:504px;top:162px;width:636px;height:16px;background:#FFFFFF;"></div>
<div style="left:504px;top:162px;width:74px;height:16px;background:#C6C6C6;"></div>
<div style="left:578px;top:162px;width:2px;height:16px;background:#E4E4E4;"></div>
<div style="left:1065px;top:162px;width:75px;height:16px;background:#C6C6C6;"></div>
<div style="top:164.00px;height:12px;line-height:12px;font-size:10px;color:#4A4A4A;white-space:pre;left:312.35px;width:400px;text-align:center;">6</div>
<div style="top:164.00px;height:12px;line-height:12px;font-size:10px;color:#4A4A4A;white-space:pre;left:334.80000000000007px;width:400px;text-align:center;">4</div>
<div style="top:164.00px;height:12px;line-height:12px;font-size:10px;color:#4A4A4A;white-space:pre;left:357.25px;width:400px;text-align:center;">2</div>
<div style="top:164.00px;height:12px;line-height:12px;font-size:10px;color:#4A4A4A;white-space:pre;left:402.1500000000001px;width:400px;text-align:center;">2</div>
<div style="top:164.00px;height:12px;line-height:12px;font-size:10px;color:#4A4A4A;white-space:pre;left:424.6px;width:400px;text-align:center;">4</div>
<div style="top:164.00px;height:12px;line-height:12px;font-size:10px;color:#4A4A4A;white-space:pre;left:447.05000000000007px;width:400px;text-align:center;">6</div>
<div style="top:164.00px;height:12px;line-height:12px;font-size:10px;color:#4A4A4A;white-space:pre;left:469.5px;width:400px;text-align:center;">8</div>
<div style="top:164.00px;height:12px;line-height:12px;font-size:10px;color:#4A4A4A;white-space:pre;left:491.95000000000005px;width:400px;text-align:center;">10</div>
<div style="top:164.00px;height:12px;line-height:12px;font-size:10px;color:#4A4A4A;white-space:pre;left:514.4000000000001px;width:400px;text-align:center;">12</div>
<div style="top:164.00px;height:12px;line-height:12px;font-size:10px;color:#4A4A4A;white-space:pre;left:536.85px;width:400px;text-align:center;">14</div>
<div style="top:164.00px;height:12px;line-height:12px;font-size:10px;color:#4A4A4A;white-space:pre;left:559.3000000000001px;width:400px;text-align:center;">16</div>
<div style="top:164.00px;height:12px;line-height:12px;font-size:10px;color:#4A4A4A;white-space:pre;left:581.75px;width:400px;text-align:center;">18</div>
<div style="top:164.00px;height:12px;line-height:12px;font-size:10px;color:#4A4A4A;white-space:pre;left:604.2px;width:400px;text-align:center;">20</div>
<div style="top:164.00px;height:12px;line-height:12px;font-size:10px;color:#4A4A4A;white-space:pre;left:626.6500000000001px;width:400px;text-align:center;">22</div>
<div style="top:164.00px;height:12px;line-height:12px;font-size:10px;color:#4A4A4A;white-space:pre;left:649.1px;width:400px;text-align:center;">24</div>
<div style="top:164.00px;height:12px;line-height:12px;font-size:10px;color:#4A4A4A;white-space:pre;left:671.55px;width:400px;text-align:center;">26</div>
<div style="top:164.00px;height:12px;line-height:12px;font-size:10px;color:#4A4A4A;white-space:pre;left:694.0px;width:400px;text-align:center;">28</div>
<div style="top:164.00px;height:12px;line-height:12px;font-size:10px;color:#4A4A4A;white-space:pre;left:716.45px;width:400px;text-align:center;">30</div>
<div style="top:164.00px;height:12px;line-height:12px;font-size:10px;color:#4A4A4A;white-space:pre;left:738.9000000000001px;width:400px;text-align:center;">32</div>
<div style="top:164.00px;height:12px;line-height:12px;font-size:10px;color:#4A4A4A;white-space:pre;left:761.35px;width:400px;text-align:center;">34</div>
<div style="top:164.00px;height:12px;line-height:12px;font-size:10px;color:#4A4A4A;white-space:pre;left:783.8px;width:400px;text-align:center;">36</div>
<div style="top:164.00px;height:12px;line-height:12px;font-size:10px;color:#4A4A4A;white-space:pre;left:806.25px;width:400px;text-align:center;">38</div>
<div style="top:164.00px;height:12px;line-height:12px;font-size:10px;color:#4A4A4A;white-space:pre;left:828.7px;width:400px;text-align:center;">40</div>
<div style="top:164.00px;height:12px;line-height:12px;font-size:10px;color:#4A4A4A;white-space:pre;left:851.1500000000001px;width:400px;text-align:center;">42</div>
<div style="top:164.00px;height:12px;line-height:12px;font-size:10px;color:#4A4A4A;white-space:pre;left:873.5999999999999px;width:400px;text-align:center;">44</div>
<div style="top:164.00px;height:12px;line-height:12px;font-size:10px;color:#4A4A4A;white-space:pre;left:896.0500000000002px;width:400px;text-align:center;">46</div>
<div style="top:164.00px;height:12px;line-height:12px;font-size:10px;color:#4A4A4A;white-space:pre;left:918.5px;width:400px;text-align:center;">48</div>
<svg style="left:574px;top:159px;" width="11" height="10" viewBox="0 0 11 10"><path d="M0.5 0.5 H10.5 V4.5 L5.5 9.4 L0.5 4.5 Z" fill="#FFFFFF" stroke="#8A8A8A" stroke-width="1"/></svg>
<svg style="left:597px;top:170.5px;" width="11" height="16" viewBox="0 0 11 16"><path d="M0.5 5.5 L5.5 0.6 L10.5 5.5 V9.5 H0.5 Z M0.5 9.5 V15.5 H10.5 V9.5" fill="#FFFFFF" stroke="#8A8A8A" stroke-width="1"/></svg>
<svg style="left:1059px;top:170.5px;" width="11" height="10" viewBox="0 0 11 10"><path d="M0.5 5.5 L5.5 0.6 L10.5 5.5 V9.5 H0.5 Z" fill="#FFFFFF" stroke="#8A8A8A" stroke-width="1"/></svg>
<div style="left:361px;top:294px;width:17px;height:722px;background:#FFFFFF;"></div>
<div style="left:361px;top:294px;width:17px;height:77px;background:#C6C6C6;"></div>
<div style="left:359.5px;top:298.7px;width:20px;height:12px;line-height:12px;text-align:center;font-size:9.8px;color:#4A4A4A;transform:rotate(-90deg)">4</div>
<div style="left:367px;top:313px;width:6px;height:1px;background:#555;"></div>
<div style="left:367px;top:329px;width:6px;height:1px;background:#555;"></div>
<div style="left:359.5px;top:331.95px;width:20px;height:12px;line-height:12px;text-align:center;font-size:9.8px;color:#4A4A4A;transform:rotate(-90deg)">2</div>
<div style="left:367px;top:346px;width:6px;height:1px;background:#555;"></div>
<div style="left:367px;top:363px;width:6px;height:1px;background:#555;"></div>
<div style="left:367px;top:379px;width:6px;height:1px;background:#555;"></div>
<div style="left:367px;top:396px;width:6px;height:1px;background:#555;"></div>
<div style="left:359.5px;top:398.45px;width:20px;height:12px;line-height:12px;text-align:center;font-size:9.8px;color:#4A4A4A;transform:rotate(-90deg)">2</div>
<div style="left:367px;top:413px;width:6px;height:1px;background:#555;"></div>
<div style="left:367px;top:429px;width:6px;height:1px;background:#555;"></div>
<div style="left:359.5px;top:431.7px;width:20px;height:12px;line-height:12px;text-align:center;font-size:9.8px;color:#4A4A4A;transform:rotate(-90deg)">4</div>
<div style="left:367px;top:446px;width:6px;height:1px;background:#555;"></div>
<div style="left:367px;top:462px;width:6px;height:1px;background:#555;"></div>
<div style="left:359.5px;top:464.95px;width:20px;height:12px;line-height:12px;text-align:center;font-size:9.8px;color:#4A4A4A;transform:rotate(-90deg)">6</div>
<div style="left:367px;top:479px;width:6px;height:1px;background:#555;"></div>
<div style="left:367px;top:496px;width:6px;height:1px;background:#555;"></div>
<div style="left:359.5px;top:498.2px;width:20px;height:12px;line-height:12px;text-align:center;font-size:9.8px;color:#4A4A4A;transform:rotate(-90deg)">8</div>
<div style="left:367px;top:512px;width:6px;height:1px;background:#555;"></div>
<div style="left:367px;top:529px;width:6px;height:1px;background:#555;"></div>
<div style="left:359.5px;top:531.45px;width:20px;height:12px;line-height:12px;text-align:center;font-size:9.8px;color:#4A4A4A;transform:rotate(-90deg)">10</div>
<div style="left:367px;top:546px;width:6px;height:1px;background:#555;"></div>
<div style="left:367px;top:562px;width:6px;height:1px;background:#555;"></div>
<div style="left:359.5px;top:564.7px;width:20px;height:12px;line-height:12px;text-align:center;font-size:9.8px;color:#4A4A4A;transform:rotate(-90deg)">12</div>
<div style="left:367px;top:579px;width:6px;height:1px;background:#555;"></div>
<div style="left:367px;top:595px;width:6px;height:1px;background:#555;"></div>
<div style="left:359.5px;top:597.95px;width:20px;height:12px;line-height:12px;text-align:center;font-size:9.8px;color:#4A4A4A;transform:rotate(-90deg)">14</div>
<div style="left:367px;top:612px;width:6px;height:1px;background:#555;"></div>
<div style="left:367px;top:629px;width:6px;height:1px;background:#555;"></div>
<div style="left:359.5px;top:631.2px;width:20px;height:12px;line-height:12px;text-align:center;font-size:9.8px;color:#4A4A4A;transform:rotate(-90deg)">16</div>
<div style="left:367px;top:645px;width:6px;height:1px;background:#555;"></div>
<div style="left:367px;top:662px;width:6px;height:1px;background:#555;"></div>
<div style="left:359.5px;top:664.45px;width:20px;height:12px;line-height:12px;text-align:center;font-size:9.8px;color:#4A4A4A;transform:rotate(-90deg)">18</div>
<div style="left:367px;top:679px;width:6px;height:1px;background:#555;"></div>
<div style="left:367px;top:695px;width:6px;height:1px;background:#555;"></div>
<div style="left:359.5px;top:697.7px;width:20px;height:12px;line-height:12px;text-align:center;font-size:9.8px;color:#4A4A4A;transform:rotate(-90deg)">20</div>
<div style="left:367px;top:712px;width:6px;height:1px;background:#555;"></div>
<div style="left:367px;top:728px;width:6px;height:1px;background:#555;"></div>
<div style="left:359.5px;top:730.95px;width:20px;height:12px;line-height:12px;text-align:center;font-size:9.8px;color:#4A4A4A;transform:rotate(-90deg)">22</div>
<div style="left:367px;top:745px;width:6px;height:1px;background:#555;"></div>
<div style="left:367px;top:762px;width:6px;height:1px;background:#555;"></div>
<div style="left:359.5px;top:764.2px;width:20px;height:12px;line-height:12px;text-align:center;font-size:9.8px;color:#4A4A4A;transform:rotate(-90deg)">24</div>
<div style="left:367px;top:778px;width:6px;height:1px;background:#555;"></div>
<div style="left:367px;top:795px;width:6px;height:1px;background:#555;"></div>
<div style="left:359.5px;top:797.45px;width:20px;height:12px;line-height:12px;text-align:center;font-size:9.8px;color:#4A4A4A;transform:rotate(-90deg)">26</div>
<div style="left:367px;top:812px;width:6px;height:1px;background:#555;"></div>
<div style="left:367px;top:828px;width:6px;height:1px;background:#555;"></div>
<div style="left:359.5px;top:830.7px;width:20px;height:12px;line-height:12px;text-align:center;font-size:9.8px;color:#4A4A4A;transform:rotate(-90deg)">28</div>
<div style="left:367px;top:845px;width:6px;height:1px;background:#555;"></div>
<div style="left:367px;top:861px;width:6px;height:1px;background:#555;"></div>
<div style="left:359.5px;top:863.95px;width:20px;height:12px;line-height:12px;text-align:center;font-size:9.8px;color:#4A4A4A;transform:rotate(-90deg)">30</div>
<div style="left:367px;top:878px;width:6px;height:1px;background:#555;"></div>
<div style="left:367px;top:895px;width:6px;height:1px;background:#555;"></div>
<div style="left:359.5px;top:897.2px;width:20px;height:12px;line-height:12px;text-align:center;font-size:9.8px;color:#4A4A4A;transform:rotate(-90deg)">32</div>
<div style="left:367px;top:911px;width:6px;height:1px;background:#555;"></div>
<div style="left:367px;top:928px;width:6px;height:1px;background:#555;"></div>
<div style="left:359.5px;top:930.45px;width:20px;height:12px;line-height:12px;text-align:center;font-size:9.8px;color:#4A4A4A;transform:rotate(-90deg)">34</div>
<div style="left:367px;top:945px;width:6px;height:1px;background:#555;"></div>
<div style="left:367px;top:961px;width:6px;height:1px;background:#555;"></div>
<div style="left:359.5px;top:963.7px;width:20px;height:12px;line-height:12px;text-align:center;font-size:9.8px;color:#4A4A4A;transform:rotate(-90deg)">36</div>
<div style="left:367px;top:978px;width:6px;height:1px;background:#555;"></div>
<div style="left:367px;top:994px;width:6px;height:1px;background:#555;"></div>
<div style="left:359.5px;top:996.95px;width:20px;height:12px;line-height:12px;text-align:center;font-size:9.8px;color:#4A4A4A;transform:rotate(-90deg)">38</div>
<div style="left:367px;top:1011px;width:6px;height:1px;background:#555;"></div>
<div style="left:562px;top:208px;width:18px;height:1px;background:#A6A6A6;"></div>
<div style="left:580px;top:208px;width:1px;height:19px;background:#A6A6A6;"></div>
<div style="left:1066px;top:208px;width:19px;height:1px;background:#A6A6A6;"></div>
<div style="left:1066px;top:208px;width:1px;height:19px;background:#A6A6A6;"></div>
<div style="left:562px;top:369px;width:18px;height:1px;background:#A6A6A6;"></div>
<div style="left:580px;top:351px;width:1px;height:19px;background:#A6A6A6;"></div>
<div style="left:1066px;top:369px;width:19px;height:1px;background:#A6A6A6;"></div>
<div style="left:1066px;top:351px;width:1px;height:19px;background:#A6A6A6;"></div>
<div style="left:1211px;top:208px;width:18px;height:1px;background:#A6A6A6;"></div>
<div style="left:1229px;top:208px;width:1px;height:19px;background:#A6A6A6;"></div>
<div style="left:1715px;top:208px;width:19px;height:1px;background:#A6A6A6;"></div>
<div style="left:1715px;top:208px;width:1px;height:19px;background:#A6A6A6;"></div>
<div style="left:1211px;top:369px;width:18px;height:1px;background:#A6A6A6;"></div>
<div style="left:1229px;top:351px;width:1px;height:19px;background:#A6A6A6;"></div>
<div style="left:1715px;top:369px;width:19px;height:1px;background:#A6A6A6;"></div>
<div style="left:1715px;top:351px;width:1px;height:19px;background:#A6A6A6;"></div>
<div class="d" style="left:648px;top:187px;width:430px;height:8px;overflow:hidden;font-size:11.2px;color:#000;white-space:pre"><div style="top:-6px;left:0;line-height:16px"><i>7</i><i>.</i><i>1</i><i>.</i><i>1</i><span style="letter-spacing:11.2px"> </span>整体服务方案<span style="letter-spacing:2.8px"> ...................................................</span><i>7</i><i>9</i><i>1</i><span class="m">↵</span></div></div>
<div class="d" style="left:820.5px;top:217px;height:16px;line-height:16px;font-size:9.6px;color:#808080;white-space:pre;font-weight:500;font-family:'Liberation Sans',sans-serif;">5<span class="m">↵</span></div>
<div class="d" style="left:1469.0px;top:217px;height:16px;line-height:16px;font-size:9.6px;color:#808080;white-space:pre;font-weight:500;font-family:'Liberation Sans',sans-serif;">6<span class="m">↵</span></div>
<div class="d" style="left:753.3px;top:340px;height:16px;line-height:16px;font-size:9.6px;color:#808080;white-space:pre;font-weight:500;">盘锦利源服装有限公司-投标文件<span class="m" style="font-size:8.5px">↵</span></div>
<div class="d" style="left:1402.3px;top:340px;height:16px;line-height:16px;font-size:9.6px;color:#808080;white-space:pre;font-weight:500;">盘锦利源服装有限公司-投标文件<span class="m" style="font-size:8.5px">↵</span></div>
<div class="d" style="left:574px;top:370px;height:28px;line-height:28px;font-size:19.3px;font-weight:600;color:#000;white-space:pre"><span style="font-size:15px;letter-spacing:3.2px;margin-left:1px">.</span>一 投标函<span class="m" style="font-size:15px;font-weight:400;top:-1px">↵</span></div>
<div class="d" style="left:581.0px;top:409px;height:16px;line-height:16px;font-size:11.2px;color:#000;white-space:pre;font-weight:500;"><span class="u" style="font-weight:700;">华油阳光（北京）商贸有限责任公司</span>（招标人名称）：<span class="m">↵</span></div>
<div class="d" style="left:604.7px;top:431px;height:16px;line-height:16px;font-size:11.2px;color:#000;white-space:pre;width:451.3px;text-align:justify;text-align-last:justify;text-justify:inter-character;font-weight:500;"><i>1</i><i>.</i><i> </i>我方已仔细研究了<span class="u" style=""><i> </i></span><span class="u" style="font-weight:700;">华油阳光（北京）商贸有限责任公司供应商资源库准入（区域）第四</span></div>
<div class="d" style="left:581.0px;top:453px;height:16px;line-height:16px;font-size:11.2px;color:#000;white-space:pre;width:477.5px;text-align:justify;text-align-last:justify;text-justify:inter-character;font-weight:500;"><span class="u" style="font-weight:700;">期<i> </i></span>（项目名称）招标项目招标文件的全部内容，愿意提供本项目<i> </i><span class="u" style=""><i> </i>一<i> </i><i> </i>标包物资供应服务，质保</span></div>
<div class="d" style="left:581.0px;top:475px;height:16px;line-height:16px;font-size:11.2px;color:#000;white-space:pre;font-weight:500;"><span class="u" style="">期满足招标文件要求</span>（设备名称及技术服务和质保期服务）<i> </i>并按合同约定履行义务。<span class="m">↵</span></div>
<div style="left:683px;top:469px;width:190px;height:28px;border:4px solid #CB1223;box-sizing:border-box;"></div>
<div class="d" style="left:604.7px;top:497px;height:16px;line-height:16px;font-size:11.2px;color:#000;white-space:pre;font-weight:500;"><i>2</i><i>.</i>我方的投标文件包括下列内容：<span class="m">↵</span></div>
<div class="d" style="left:604.7px;top:518px;height:16px;line-height:16px;font-size:11.2px;color:#000;white-space:pre;font-weight:500;">（<i>1</i>）投标函；<span class="m">↵</span></div>
<div class="d" style="left:604.7px;top:540px;height:16px;line-height:16px;font-size:11.2px;color:#000;white-space:pre;font-weight:500;">（<i>2</i>）法定代表人（单位负责人）身份证明或授权委托书；<span class="m">↵</span></div>
<div class="d" style="left:604.7px;top:562px;height:16px;line-height:16px;font-size:11.2px;color:#000;white-space:pre;font-weight:500;">（<i>3</i>）联合体协议书（如接受联合体投标）<span class="m">↵</span></div>
<div class="d" style="left:604.7px;top:584px;height:16px;line-height:16px;font-size:11.2px;color:#000;white-space:pre;font-weight:500;">（<i>4</i>）投标保证金，金额为（<span class="uf" style="width:105px;padding-left:17.5px"><i>5</i><i>0</i><i>0</i><i>0</i><i> </i>元</span>）；<span class="m">↵</span></div>
<div class="d" style="left:604.7px;top:606px;height:16px;line-height:16px;font-size:11.2px;color:#000;white-space:pre;font-weight:500;">（<i>5</i>）商务和技术偏差表；<span class="m">↵</span></div>
<div class="d" style="left:604.7px;top:628px;height:16px;line-height:16px;font-size:11.2px;color:#000;white-space:pre;font-weight:500;">（<i>6</i>）报价表；<span class="m">↵</span></div>
<div class="d" style="left:604.7px;top:650px;height:16px;line-height:16px;font-size:11.2px;color:#000;white-space:pre;font-weight:500;">（<i>7</i>）资格审查资料；<span class="m">↵</span></div>
<div class="d" style="left:604.7px;top:671px;height:16px;line-height:16px;font-size:11.2px;color:#000;white-space:pre;font-weight:500;">（<i>8</i>）技术性能指标的详细描述；<span class="m">↵</span></div>
<div class="d" style="left:604.7px;top:693px;height:16px;line-height:16px;font-size:11.2px;color:#000;white-space:pre;font-weight:500;">（<i>9</i>）技术支持资料；<span class="m">↵</span></div>
<div class="d" style="left:604.7px;top:715px;height:16px;line-height:16px;font-size:11.2px;color:#000;white-space:pre;font-weight:500;">（<i>1</i><i>0</i>）技术服务和质保期服务计划；<span class="m">↵</span></div>
<div class="d" style="left:604.7px;top:737px;height:16px;line-height:16px;font-size:11.2px;color:#000;white-space:pre;font-weight:500;">（<i>1</i><i>1</i>）其他资料；<span class="m">↵</span></div>
<div class="d" style="left:604.7px;top:759px;height:16px;line-height:16px;font-size:11.2px;color:#000;white-space:pre;font-weight:500;"><span style="font-family:'Noto Serif CJK SC',serif;letter-spacing:-0.6px">……</span><span class="m">↵</span></div>
<div class="d" style="left:604.7px;top:781px;height:16px;line-height:16px;font-size:11.2px;color:#000;white-space:pre;font-weight:500;">投标文件的上述组成部分如存在内容不一致的，以投标函为准。<span class="m">↵</span></div>
<div class="d" style="left:604.7px;top:802px;height:16px;line-height:16px;font-size:11.2px;color:#000;white-space:pre;font-weight:500;"><i>3</i><i>.</i><i> </i>我方承诺除商务和技术偏差表列出的偏差外，我方响应招标文件的全部要求。<span class="m">↵</span></div>
<div class="d" style="left:604.7px;top:824px;height:16px;line-height:16px;font-size:11.2px;color:#000;white-space:pre;font-weight:500;"><i>4</i><i>.</i><i> </i>我方承诺在招标文件规定的投标有效期内不撤销投标文件。<span class="m">↵</span></div>
<div class="d" style="left:604.7px;top:846px;height:16px;line-height:16px;font-size:11.2px;color:#000;white-space:pre;font-weight:500;"><i>5</i><i>.</i><i> </i>如我方中标，我方承诺：<span class="m">↵</span></div>
<div class="d" style="left:604.7px;top:868px;height:16px;line-height:16px;font-size:11.2px;color:#000;white-space:pre;font-weight:500;">（<i>1</i>）在收到中标通知书后，在中标通知书规定的期限内与你方签订合同。<span class="m">↵</span></div>
<div class="d" style="left:604.7px;top:890px;height:16px;line-height:16px;font-size:11.2px;color:#000;white-space:pre;font-weight:500;">（<i>2</i>）在签订合同时不向你方提出附加条件。<span class="m">↵</span></div>
<div class="d" style="left:604.7px;top:912px;height:16px;line-height:16px;font-size:11.2px;color:#000;white-space:pre;font-weight:500;">（<i>3</i>）按照招标文件要求提交履约保证金。<span class="m">↵</span></div>
<div class="d" style="left:604.7px;top:933px;height:16px;line-height:16px;font-size:11.2px;color:#000;white-space:pre;font-weight:500;">（<i>4</i>）在合同约定的期限内完成合同规定的全部义务。<span class="m">↵</span></div>
<div class="d" style="left:604.7px;top:955px;height:16px;line-height:16px;font-size:11.2px;color:#000;white-space:pre;width:454.3px;text-align:justify;text-align-last:justify;text-justify:inter-character;font-weight:500;">（<i>5</i>）投标人已详细审查全部招标文件，包括第（补遗文件）（如果有的话）。我们完全理解并</div>
<div class="d" style="left:581.0px;top:977px;height:16px;line-height:16px;font-size:11.2px;color:#000;white-space:pre;font-weight:500;">同意放弃对这方面有不明及误解的权力。<span class="m">↵</span></div>
<div class="d" style="left:604.7px;top:999px;height:16px;line-height:16px;font-size:11.2px;color:#000;white-space:pre;font-weight:500;">（<i>6</i>）本投标有效期为自投标截止日起<i style="width:2.8px"> </i><span class="u" style=""><i>9</i><i>0</i><i style="width:2.8px"> </i></span>日历日。<span class="m">↵</span></div>
<div style="left:581px;top:420px;width:44.700000000000045px;height:1px;background:#1F5AE0;"></div>
<div style="left:581px;top:422px;width:44.700000000000045px;height:1px;background:#1F5AE0;"></div>
<div style="left:717.2px;top:442px;width:44.59999999999991px;height:1px;background:#1F5AE0;"></div>
<div style="left:717.2px;top:444px;width:44.59999999999991px;height:1px;background:#1F5AE0;"></div>
<div style="left:920.6px;top:442px;width:33.799999999999955px;height:1px;background:#1F5AE0;"></div>
<div style="left:920.6px;top:444px;width:33.799999999999955px;height:1px;background:#1F5AE0;"></div>
<div style="left:935px;top:464px;width:44.700000000000045px;height:1px;background:#1F5AE0;"></div>
<div style="left:935px;top:466px;width:44.700000000000045px;height:1px;background:#1F5AE0;"></div>
<svg style="left:910.5px;top:464.5px;" width="13.5" height="3" viewBox="0 0 13.5 3"><path d="M0 1.5 L1 0.3  L3 2.7  L5 0.3  L7 2.7  L9 0.3  L11 2.7 " fill="none" stroke="#FF0000" stroke-width="0.9"/></svg>
<svg style="left:805.7px;top:486px;" width="34.799999999999955" height="3" viewBox="0 0 34.799999999999955 3"><path d="M0 1.5 L1 0.3  L3 2.7  L5 0.3  L7 2.7  L9 0.3  L11 2.7  L13 0.3  L15 2.7  L17 0.3  L19 2.7  L21 0.3  L23 2.7  L25 0.3  L27 2.7  L29 0.3  L31 2.7  L33 0.3 " fill="none" stroke="#FF0000" stroke-width="0.9"/></svg>
<svg style="left:695.3px;top:726px;" width="34.40000000000009" height="3" viewBox="0 0 34.40000000000009 3"><path d="M0 1.5 L1 0.3  L3 2.7  L5 0.3  L7 2.7  L9 0.3  L11 2.7  L13 0.3  L15 2.7  L17 0.3  L19 2.7  L21 0.3  L23 2.7  L25 0.3  L27 2.7  L29 0.3  L31 2.7  L33 0.3 " fill="none" stroke="#FF0000" stroke-width="0.9"/></svg>
<div class="d" style="left:1230.5px;top:372px;height:16px;line-height:16px;font-size:11.2px;color:#000;white-space:pre;font-weight:500;">一定接受最低价的投标或收到的任何投标。<span class="m">↵</span></div>
<div class="d" style="left:1253.8px;top:394px;height:16px;line-height:16px;font-size:11.2px;color:#000;white-space:pre;width:444.0px;text-align:justify;text-align-last:justify;text-justify:inter-character;font-weight:500;"><i>6</i><i>.</i><i> </i>我方在此声明，所递交的投标文件及有关资料内容完整、真实和准确，且不存在第二章</div>
<div class="d" style="left:1230.5px;top:415px;height:16px;line-height:16px;font-size:11.2px;color:#000;white-space:pre;font-weight:500;"><span style="display:inline-block;width:11.2px;text-align:right;font-family:'Noto Serif CJK SC',serif">“</span>投标人须知<span style="display:inline-block;width:11.2px;text-align:left;font-family:'Noto Serif CJK SC',serif">”</span>第<i style="width:2.8px"> </i><i>1</i><i>.</i><i>4</i><i>.</i><i>3</i><i style="width:2.8px"> </i>项规定的任何一种情形。<span class="m">↵</span></div>
<div class="d" style="left:1253.8px;top:437px;height:16px;line-height:16px;font-size:11.2px;color:#000;white-space:pre;font-weight:500;"><i>7</i><i>.</i><i> </i></div>
<div style="left:1271px;top:449px;width:185px;height:1px;background:#000;"></div>
<div class="d" style="left:1361.0px;top:437px;height:16px;line-height:16px;font-size:12px;color:#000;white-space:pre;font-weight:500;"><span style="font-family:'Liberation Sans',sans-serif;font-weight:700">/</span></div>
<div class="d" style="left:1455.7px;top:437px;height:16px;line-height:16px;font-size:11.2px;color:#000;white-space:pre;font-weight:500;letter-spacing:-0.5px;">（其他补充说明）。<span class="m">↵</span></div>
<div class="d" style="left:1253.5px;top:459px;height:16px;line-height:16px;font-size:11.2px;color:#000;white-space:pre;font-weight:500;"><span class="m">↵</span></div>
<svg style="left:0px;top:0px;pointer-events:none;" width="1924" height="1044" viewBox="0 0 1924 1044"><g opacity="0.6"><circle cx="1442.6" cy="491.7" r="59.8" fill="none" stroke="#EC6468" stroke-width="3"/><polygon points="1442.6,472.2 1447.1,485.6 1461.1,485.7 1449.8,494.0 1454.1,507.5 1442.6,499.3 1431.1,507.5 1435.4,494.0 1424.1,485.7 1438.1,485.6" fill="#EC6468" transform="rotate(-17 1442.6 491.7)"/><g transform="translate(1408.0 522.8) rotate(-132.0) scale(0.9 1.12)"><text x="0" y="0" text-anchor="middle" dominant-baseline="central" font-family="Noto Serif CJK SC,serif" font-size="18.5" font-weight="600" fill="#EC6468">盘</text></g><g transform="translate(1398.0 504.8) rotate(-106.4) scale(0.9 1.12)"><text x="0" y="0" text-anchor="middle" dominant-baseline="central" font-family="Noto Serif CJK SC,serif" font-size="18.5" font-weight="600" fill="#EC6468">锦</text></g><g transform="translate(1396.7 484.3) rotate(-80.8) scale(0.9 1.12)"><text x="0" y="0" text-anchor="middle" dominant-baseline="central" font-family="Noto Serif CJK SC,serif" font-size="18.5" font-weight="600" fill="#EC6468">利</text></g><g transform="translate(1404.4 465.2) rotate(-55.2) scale(0.9 1.12)"><text x="0" y="0" text-anchor="middle" dominant-baseline="central" font-family="Noto Serif CJK SC,serif" font-size="18.5" font-weight="600" fill="#EC6468">源</text></g><g transform="translate(1419.6 451.3) rotate(-29.6) scale(0.9 1.12)"><text x="0" y="0" text-anchor="middle" dominant-baseline="central" font-family="Noto Serif CJK SC,serif" font-size="18.5" font-weight="600" fill="#EC6468">服</text></g><g transform="translate(1439.4 445.3) rotate(-4.0) scale(0.9 1.12)"><text x="0" y="0" text-anchor="middle" dominant-baseline="central" font-family="Noto Serif CJK SC,serif" font-size="18.5" font-weight="600" fill="#EC6468">装</text></g><g transform="translate(1459.7 448.5) rotate(21.6) scale(0.9 1.12)"><text x="0" y="0" text-anchor="middle" dominant-baseline="central" font-family="Noto Serif CJK SC,serif" font-size="18.5" font-weight="600" fill="#EC6468">有</text></g><g transform="translate(1476.7 460.1) rotate(47.2) scale(0.9 1.12)"><text x="0" y="0" text-anchor="middle" dominant-baseline="central" font-family="Noto Serif CJK SC,serif" font-size="18.5" font-weight="600" fill="#EC6468">限</text></g><g transform="translate(1487.0 477.9) rotate(72.8) scale(0.9 1.12)"><text x="0" y="0" text-anchor="middle" dominant-baseline="central" font-family="Noto Serif CJK SC,serif" font-size="18.5" font-weight="600" fill="#EC6468">公</text></g><g transform="translate(1488.6 498.5) rotate(98.4) scale(0.9 1.12)"><text x="0" y="0" text-anchor="middle" dominant-baseline="central" font-family="Noto Serif CJK SC,serif" font-size="18.5" font-weight="600" fill="#EC6468">司</text></g><text x="1420.4" y="539.3" text-anchor="middle" dominant-baseline="central" font-family="Liberation Serif,serif" font-size="7.5" fill="#EC6468" transform="rotate(25.0 1420.4 539.3)">2</text><text x="1425.7" y="541.4" text-anchor="middle" dominant-baseline="central" font-family="Liberation Serif,serif" font-size="7.5" fill="#EC6468" transform="rotate(18.8 1425.7 541.4)">1</text><text x="1431.1" y="542.9" text-anchor="middle" dominant-baseline="central" font-family="Liberation Serif,serif" font-size="7.5" fill="#EC6468" transform="rotate(12.6 1431.1 542.9)">1</text><text x="1436.7" y="543.9" text-anchor="middle" dominant-baseline="central" font-family="Liberation Serif,serif" font-size="7.5" fill="#EC6468" transform="rotate(6.4 1436.7 543.9)">1</text><text x="1442.4" y="544.2" text-anchor="middle" dominant-baseline="central" font-family="Liberation Serif,serif" font-size="7.5" fill="#EC6468" transform="rotate(0.2 1442.4 544.2)">0</text><text x="1448.1" y="543.9" text-anchor="middle" dominant-baseline="central" font-family="Liberation Serif,serif" font-size="7.5" fill="#EC6468" transform="rotate(-6.0 1448.1 543.9)">3</text><text x="1453.7" y="543.0" text-anchor="middle" dominant-baseline="central" font-family="Liberation Serif,serif" font-size="7.5" fill="#EC6468" transform="rotate(-12.2 1453.7 543.0)">0</text><text x="1459.2" y="541.5" text-anchor="middle" dominant-baseline="central" font-family="Liberation Serif,serif" font-size="7.5" fill="#EC6468" transform="rotate(-18.4 1459.2 541.5)">0</text><text x="1464.5" y="539.4" text-anchor="middle" dominant-baseline="central" font-family="Liberation Serif,serif" font-size="7.5" fill="#EC6468" transform="rotate(-24.6 1464.5 539.4)">1</text><text x="1469.5" y="536.8" text-anchor="middle" dominant-baseline="central" font-family="Liberation Serif,serif" font-size="7.5" fill="#EC6468" transform="rotate(-30.8 1469.5 536.8)">7</text><text x="1474.2" y="533.6" text-anchor="middle" dominant-baseline="central" font-family="Liberation Serif,serif" font-size="7.5" fill="#EC6468" transform="rotate(-37.0 1474.2 533.6)">3</text><text x="1478.5" y="530.0" text-anchor="middle" dominant-baseline="central" font-family="Liberation Serif,serif" font-size="7.5" fill="#EC6468" transform="rotate(-43.2 1478.5 530.0)">6</text><text x="1482.5" y="525.9" text-anchor="middle" dominant-baseline="central" font-family="Liberation Serif,serif" font-size="7.5" fill="#EC6468" transform="rotate(-49.4 1482.5 525.9)">9</text></g></svg>
<div class="d" style="left:1337.2px;top:481px;height:16px;line-height:16px;font-size:11.2px;color:#000;white-space:pre;font-weight:500;">投<i> </i>标<i> </i>人：<span class="u" style=""><i> </i></span><span class="u" style="font-weight:700;">盘锦利源服装有限公司</span>（盖单位章）<span class="m">↵</span></div>
<div class="d" style="left:1337.8px;top:503px;height:16px;line-height:16px;font-size:11.2px;color:#000;white-space:pre;font-weight:500;">法定代表人（单位负责人）或其委托代理人：</div>
<div style="left:1563px;top:515px;width:44px;height:1px;background:#000;"></div>
<div class="d" style="left:1611.0px;top:503px;height:16px;line-height:16px;font-size:11.2px;color:#000;white-space:pre;font-weight:500;">（签字）<span class="m">↵</span></div>
<div class="d" style="left:1548px;top:491px;height:40px;line-height:40px;font-size:27px;font-weight:300;color:#5A5A5A;white-space:pre;letter-spacing:-5px;transform:skew(-14deg,-7deg) scaleY(1.15);transform-origin:0 50%;font-family:'Noto Serif CJK SC',serif">李皇新</div>
<div class="d" style="left:1337.2px;top:525px;height:16px;line-height:16px;font-size:11.2px;color:#000;white-space:pre;font-weight:500;">地<i> </i><i> </i><i> </i><i> </i>址：</div>
<div class="d" style="left:1391.8px;top:525px;height:16px;line-height:16px;font-size:11.2px;color:#000;white-space:pre;font-weight:500;"><span class="u" style="font-weight:700;">盘锦市兴隆台区园丁新村二区<span style="font-family:'Liberation Sans',sans-serif;font-size:11px"><i style="width:2.8px"> </i><i>2</i><i>2</i><i>#</i><i>1</i><i>-</i><i>5</i><i>6</i><i>-</i><i>5</i><i>6</i><i>9</i><i>-</i><i>1</i><i>-</i><i>3</i><i>0</i><i>2</i></span></span><span class="m">↵</span></div>
<div class="d" style="left:1337.2px;top:546px;height:16px;line-height:16px;font-size:11.2px;color:#000;white-space:pre;font-weight:500;">网<i> </i><i> </i><i> </i><i> </i>址：</div>
<div style="left:1393px;top:558px;width:219.5px;height:1px;background:#000;"></div>
<div class="d" style="left:1506.0px;top:546px;height:16px;line-height:16px;font-size:11.2px;color:#000;white-space:pre;font-weight:500;"><span style="font-family:'Liberation Sans',sans-serif;font-size:11.2px;letter-spacing:-0.63px;font-weight:400">/</span></div>
<div class="d" style="left:1613.5px;top:546px;height:16px;line-height:16px;font-size:11.2px;color:#000;white-space:pre;font-weight:500;"><span class="m">↵</span></div>
<div class="d" style="left:1337.2px;top:568px;height:16px;line-height:16px;font-size:11.2px;color:#000;white-space:pre;font-weight:500;">电<i> </i><i> </i><i> </i><i> </i>话：</div>
<div style="left:1393px;top:580px;width:219.5px;height:1px;background:#000;"></div>
<div class="d" style="left:1476.6px;top:568px;height:16px;line-height:16px;font-size:11.2px;color:#000;white-space:pre;font-weight:500;"><span style="font-family:'Liberation Sans',sans-serif;font-size:11.2px;letter-spacing:-0.63px;font-weight:700">0427-2352789</span></div>
<div class="d" style="left:1613.5px;top:568px;height:16px;line-height:16px;font-size:11.2px;color:#000;white-space:pre;font-weight:500;"><span class="m">↵</span></div>
<div class="d" style="left:1337.2px;top:590px;height:16px;line-height:16px;font-size:11.2px;color:#000;white-space:pre;font-weight:500;">传<i> </i><i> </i><i> </i><i> </i>真：</div>
<div style="left:1393px;top:602px;width:219.5px;height:1px;background:#000;"></div>
<div class="d" style="left:1511.5px;top:590px;height:16px;line-height:16px;font-size:11.2px;color:#000;white-space:pre;font-weight:500;"><span style="font-family:'Liberation Sans',sans-serif;font-size:11.2px;letter-spacing:-0.63px;font-weight:400">/</span></div>
<div class="d" style="left:1613.5px;top:590px;height:16px;line-height:16px;font-size:11.2px;color:#000;white-space:pre;font-weight:500;"><span class="m">↵</span></div>
<div class="d" style="left:1337.2px;top:612px;height:16px;line-height:16px;font-size:11.2px;color:#000;white-space:pre;font-weight:500;">邮政编码：</div>
<div style="left:1393px;top:624px;width:219.5px;height:1px;background:#000;"></div>
<div class="d" style="left:1494.7px;top:612px;height:16px;line-height:16px;font-size:11.2px;color:#000;white-space:pre;font-weight:500;"><span style="font-family:'Liberation Sans',sans-serif;font-size:11.2px;letter-spacing:-0.63px;font-weight:700">124010</span></div>
<div class="d" style="left:1613.5px;top:612px;height:16px;line-height:16px;font-size:11.2px;color:#000;white-space:pre;font-weight:500;"><span class="m">↵</span></div>
<div class="d" style="left:1708.5px;top:634px;height:16px;line-height:16px;font-size:11.2px;color:#000;white-space:pre;font-weight:500;"><span class="m">↵</span></div>
<div class="d" style="left:1616.3px;top:656px;height:16px;line-height:16px;font-size:11.2px;color:#000;white-space:pre;font-weight:500;"><span class="u" style="font-weight:700"><span style="font-family:'Liberation Sans',sans-serif;letter-spacing:-0.63px">2026</span><i style="width:2.8px"> </i>年<i style="width:2.8px"> </i><span style="font-family:'Liberation Sans',sans-serif;letter-spacing:-0.63px">04</span><i style="width:2.8px"> </i>月<i style="width:2.8px"> </i><span style="font-family:'Liberation Sans',sans-serif;letter-spacing:-0.63px">03</span><i style="width:2.8px"> </i>日</span><span class="m">↵</span></div>
<div class="d" style="left:1229.5px;top:677px;height:16px;line-height:16px;font-size:11.2px;color:#000;white-space:pre;font-weight:500;"><span class="m">↵</span></div>
<div class="d" style="left:1383.5px;top:701px;height:16px;line-height:16px;font-size:11.2px;color:#000;white-space:pre;font-weight:500;"><span class="m">↵</span></div>
<div style="left:0px;top:157px;width:355px;height:859px;background:#E6E6E6;"></div>
<div style="left:355px;top:157px;width:1px;height:859px;background:#C6C6C6;"></div>
<div style="top:170.00px;height:28px;line-height:28px;font-size:20.8px;color:#333333;white-space:pre;left:20px;font-weight:300;">导航</div>
<svg style="left:284px;top:176px;" width="13" height="9" viewBox="0 0 13 9"><path d="M0.8 0.8 L6.5 7.4 L12.2 0.8" fill="none" stroke="#444" stroke-width="1.2"/></svg>
<svg style="left:326px;top:175px;" width="11" height="11" viewBox="0 0 11 11"><path d="M0.6 0.6 L10.4 10.4 M10.4 0.6 L0.6 10.4" stroke="#444" stroke-width="1.2"/></svg>
<div style="left:20px;top:213px;width:317px;height:26px;background:#FFFFFF;border:1px solid #ABABAB;box-sizing:border-box;"></div>
<div style="top:215.50px;height:20px;line-height:20px;font-size:12px;color:#6A6A6A;white-space:pre;left:27px;">在文档中搜索</div>
<svg style="left:309px;top:218px;" width="14" height="14" viewBox="0 0 14 14"><circle cx="8.4" cy="5.4" r="4.1" fill="none" stroke="#2B579A" stroke-width="1.7"/><path d="M5.6 8.4 L1 13" stroke="#2B579A" stroke-width="2"/></svg>
<svg style="left:325.6px;top:222.5px;" width="10" height="8" viewBox="0 0 10 8"><path d="M2.8 2.9 L5 5.1 L7.2 2.9" fill="none" stroke="#444" stroke-width="1"/></svg>
<div style="top:255.00px;height:20px;line-height:20px;font-size:12.2px;color:#2B579A;white-space:pre;left:20px;font-weight:700;">标题</div>
<div style="left:20px;top:279px;width:26px;height:3px;background:#2B579A;"></div>
<div style="top:255.00px;height:20px;line-height:20px;font-size:12.2px;color:#444444;white-space:pre;left:69.3px;">页面</div>
<div style="top:255.00px;height:20px;line-height:20px;font-size:12.2px;color:#444444;white-space:pre;left:118.8px;">结果</div>
<div style="left:35px;top:286px;width:290px;height:18px;background:#FFFFFF;border:1px solid #C8C8C8;box-sizing:border-box;"></div>
<svg style="left:175px;top:291.5px;" width="8" height="8" viewBox="0 0 8 8"><path d="M0.5 0.8 H7.5" stroke="#444" stroke-width="1.1"/><path d="M4 2.6 L7.4 7 H0.6 Z" fill="#444"/></svg>
<div style="left:36px;top:304px;width:289px;height:20px;background:#C3D6F2;"></div>
<div style="top:304.80px;height:20px;line-height:20px;font-size:12px;color:#444444;white-space:pre;left:41px;">一 投标函</div>
<div style="top:325.80px;height:20px;line-height:20px;font-size:12px;color:#444444;white-space:pre;left:41px;">二 法定代表人<span style="letter-spacing:0">（</span>单位负责人）身份证明</div>
<div style="top:346.80px;height:20px;line-height:20px;font-size:12px;color:#444444;white-space:pre;left:41px;">三 授权委托书</div>
<div style="top:367.80px;height:20px;line-height:20px;font-size:12px;color:#444444;white-space:pre;left:41px;">四 投标保证金</div>
<div style="top:388.80px;height:20px;line-height:20px;font-size:12px;color:#444444;white-space:pre;left:41px;">五 商务和技术偏差表</div>
<div style="top:409.80px;height:20px;line-height:20px;font-size:12px;color:#444444;white-space:pre;left:41px;">六 报价表</div>
<svg style="left:25px;top:416.8px;" width="7" height="7" viewBox="0 0 7 7"><path d="M6.5 0.5 V6.5 H0.5 Z" fill="#444"/></svg>
<div style="top:430.80px;height:20px;line-height:20px;font-size:12px;color:#444444;white-space:pre;left:57px;">1 开标一览表</div>
<div style="top:451.80px;height:20px;line-height:20px;font-size:12px;color:#444444;white-space:pre;left:41px;">七 资格审查资料</div>
<svg style="left:25px;top:457.3px;" width="6" height="9" viewBox="0 0 6 9"><path d="M0.6 0.8 L5 4.5 L0.6 8.2 Z" fill="none" stroke="#8A8A8A" stroke-width="0.9"/></svg>
<div style="top:472.80px;height:20px;line-height:20px;font-size:12px;color:#444444;white-space:pre;left:41px;">八 技术性能指标的详细描述</div>
<svg style="left:25px;top:479.8px;" width="7" height="7" viewBox="0 0 7 7"><path d="M6.5 0.5 V6.5 H0.5 Z" fill="#444"/></svg>
<div style="top:493.80px;height:20px;line-height:20px;font-size:12px;color:#444444;white-space:pre;left:57px;">1 供货要求</div>
<div style="top:514.80px;height:20px;line-height:20px;font-size:12px;color:#444444;white-space:pre;left:41px;">九 技术支持资料</div>
<svg style="left:25px;top:521.8px;" width="7" height="7" viewBox="0 0 7 7"><path d="M6.5 0.5 V6.5 H0.5 Z" fill="#444"/></svg>
<div style="top:535.80px;height:20px;line-height:20px;font-size:12px;color:#444444;white-space:pre;left:57px;">1 检测报告</div>
<svg style="left:41px;top:542.8px;" width="7" height="7" viewBox="0 0 7 7"><path d="M6.5 0.5 V6.5 H0.5 Z" fill="#444"/></svg>
<div style="top:556.80px;height:20px;line-height:20px;font-size:12px;color:#444444;white-space:pre;left:73px;">1.1 布棉手套1488</div>
<div style="top:577.80px;height:20px;line-height:20px;font-size:12px;color:#444444;white-space:pre;left:73px;">1.2 挂胶布手套1489</div>
<div style="top:598.80px;height:20px;line-height:20px;font-size:12px;color:#444444;white-space:pre;left:73px;">1.3 浸塑手套1490</div>
<div style="top:619.80px;height:20px;line-height:20px;font-size:12px;color:#444444;white-space:pre;left:73px;">1.4 挂胶布手套1529</div>
<div style="top:640.80px;height:20px;line-height:20px;font-size:12px;color:#444444;white-space:pre;left:41px;">十 技术服务和质保期服务计划</div>
<svg style="left:25px;top:647.8px;" width="7" height="7" viewBox="0 0 7 7"><path d="M6.5 0.5 V6.5 H0.5 Z" fill="#444"/></svg>
<div style="top:661.80px;height:20px;line-height:20px;font-size:12px;color:#444444;white-space:pre;left:57px;">1 服务方案</div>
<svg style="left:41px;top:668.8px;" width="7" height="7" viewBox="0 0 7 7"><path d="M6.5 0.5 V6.5 H0.5 Z" fill="#444"/></svg>
<div style="top:682.80px;height:20px;line-height:20px;font-size:12px;color:#444444;white-space:pre;left:73px;">1.1 整体服务方案</div>
<svg style="left:57px;top:688.3px;" width="6" height="9" viewBox="0 0 6 9"><path d="M0.6 0.8 L5 4.5 L0.6 8.2 Z" fill="none" stroke="#8A8A8A" stroke-width="0.9"/></svg>
<div style="top:703.80px;height:20px;line-height:20px;font-size:12px;color:#444444;white-space:pre;left:73px;">1.2 配送方案</div>
<svg style="left:57px;top:709.3px;" width="6" height="9" viewBox="0 0 6 9"><path d="M0.6 0.8 L5 4.5 L0.6 8.2 Z" fill="none" stroke="#8A8A8A" stroke-width="0.9"/></svg>
<div style="top:724.80px;height:20px;line-height:20px;font-size:12px;color:#444444;white-space:pre;left:73px;">1.3 退换货承诺</div>
<svg style="left:57px;top:730.3px;" width="6" height="9" viewBox="0 0 6 9"><path d="M0.6 0.8 L5 4.5 L0.6 8.2 Z" fill="none" stroke="#8A8A8A" stroke-width="0.9"/></svg>
<div style="top:745.80px;height:20px;line-height:20px;font-size:12px;color:#444444;white-space:pre;left:73px;">1.4 营销方案</div>
<svg style="left:57px;top:751.3px;" width="6" height="9" viewBox="0 0 6 9"><path d="M0.6 0.8 L5 4.5 L0.6 8.2 Z" fill="none" stroke="#8A8A8A" stroke-width="0.9"/></svg>
<div style="top:766.80px;height:20px;line-height:20px;font-size:12px;color:#444444;white-space:pre;left:57px;">2 运营能力</div>
<svg style="left:41px;top:773.8px;" width="7" height="7" viewBox="0 0 7 7"><path d="M6.5 0.5 V6.5 H0.5 Z" fill="#444"/></svg>
<div style="top:787.80px;height:20px;line-height:20px;font-size:12px;color:#444444;white-space:pre;left:73px;">2.1 商品基础信息及价格管理</div>
<svg style="left:57px;top:793.3px;" width="6" height="9" viewBox="0 0 6 9"><path d="M0.6 0.8 L5 4.5 L0.6 8.2 Z" fill="none" stroke="#8A8A8A" stroke-width="0.9"/></svg>
<div style="top:808.80px;height:20px;line-height:20px;font-size:12px;color:#444444;white-space:pre;left:73px;">2.2 商品运营与结算团队建设</div>
<svg style="left:57px;top:814.3px;" width="6" height="9" viewBox="0 0 6 9"><path d="M0.6 0.8 L5 4.5 L0.6 8.2 Z" fill="none" stroke="#8A8A8A" stroke-width="0.9"/></svg>
<div style="top:829.80px;height:20px;line-height:20px;font-size:12px;color:#444444;white-space:pre;left:73px;">2.3 开票时效</div>
<svg style="left:57px;top:835.3px;" width="6" height="9" viewBox="0 0 6 9"><path d="M0.6 0.8 L5 4.5 L0.6 8.2 Z" fill="none" stroke="#8A8A8A" stroke-width="0.9"/></svg>
<div style="top:850.80px;height:20px;line-height:20px;font-size:12px;color:#444444;white-space:pre;left:73px;">2.4 订单履约管理</div>
<svg style="left:57px;top:856.3px;" width="6" height="9" viewBox="0 0 6 9"><path d="M0.6 0.8 L5 4.5 L0.6 8.2 Z" fill="none" stroke="#8A8A8A" stroke-width="0.9"/></svg>
<div style="top:871.80px;height:20px;line-height:20px;font-size:12px;color:#444444;white-space:pre;left:73px;">2.5 库存管理与项目管理能力</div>
<svg style="left:57px;top:877.3px;" width="6" height="9" viewBox="0 0 6 9"><path d="M0.6 0.8 L5 4.5 L0.6 8.2 Z" fill="none" stroke="#8A8A8A" stroke-width="0.9"/></svg>
<div style="top:892.80px;height:20px;line-height:20px;font-size:12px;color:#444444;white-space:pre;left:57px;">3 质保期服务计划</div>
<svg style="left:41px;top:899.8px;" width="7" height="7" viewBox="0 0 7 7"><path d="M6.5 0.5 V6.5 H0.5 Z" fill="#444"/></svg>
<div style="top:913.80px;height:20px;line-height:20px;font-size:12px;color:#444444;white-space:pre;left:73px;">3.1 总体服务目标</div>
<div style="top:934.80px;height:20px;line-height:20px;font-size:12px;color:#444444;white-space:pre;left:73px;">3.2 服务原则</div>
<div style="top:955.80px;height:20px;line-height:20px;font-size:12px;color:#444444;white-space:pre;left:73px;">3.3 质保期承诺</div>
<div style="top:976.80px;height:20px;line-height:20px;font-size:12px;color:#444444;white-space:pre;left:73px;">3.4 质保服务组织保障体系</div>
<div style="left:0px;top:1016px;width:1924px;height:22px;background:#F3F3F3;"></div>
<div style="left:0px;top:1015px;width:1924px;height:1px;background:#D0D0D0;"></div>
<div style="left:0px;top:1038px;width:1924px;height:6px;background:#1E2F3B;"></div>
<div style="left:350px;top:1038px;width:48px;height:6px;background:#B0682C;"></div>
<div style="top:1018.00px;height:20px;line-height:20px;font-size:12px;color:#444444;white-space:pre;left:17.5px;letter-spacing:0.4px;">第 7 页，共 845 页</div>
<div style="top:1018.00px;height:20px;line-height:20px;font-size:12px;color:#444444;white-space:pre;left:141px;letter-spacing:0.4px;">4/255763 个字</div>
<svg style="left:242px;top:1021px;" width="15" height="12" viewBox="0 0 15 12"><path d="M0.5 1 H5.5 V10.5 H0.5 Z M5.5 1 L7.5 2.2 V11.5 L5.5 10.5" fill="none" stroke="#666" stroke-width="1"/><path d="M9.5 3 L13.5 8 M13.5 3 L9.5 8" stroke="#666" stroke-width="1"/></svg>
<div style="top:1018.00px;height:20px;line-height:20px;font-size:12px;color:#444444;white-space:pre;left:273.5px;">简体中文(中国大陆)</div>
<div style="top:1018.00px;height:20px;line-height:20px;font-size:12px;color:#444444;white-space:pre;left:396px;">修订: 关闭</div>
<svg style="left:469px;top:1020px;" width="17" height="14" viewBox="0 0 17 14"><path d="M9.5 2 A5 5 0 1 0 11 10.5" fill="none" stroke="#555" stroke-width="1.1" stroke-dasharray="2.2 1.4"/><path d="M6 6.5 L14.5 12.5 M14.5 6.5 L8 12.5" stroke="#444" stroke-width="1.6"/></svg>
<div style="top:1018.00px;height:20px;line-height:20px;font-size:12px;color:#444444;white-space:pre;left:488.5px;font-weight:700;">辅助功能: 调查</div>
<svg style="left:1634px;top:1020px;" width="14" height="14" viewBox="0 0 14 14"><path d="M7 1.5 V13 M7 1.5 C5 0.3 2.5 0.3 0.8 1.2 V12.2 C2.5 11.4 5 11.4 7 13 C9 11.4 11.5 11.4 13.2 12.2 V1.2 C11.5 0.3 9 0.3 7 1.5" fill="none" stroke="#555" stroke-width="1"/><path d="M2.3 3.6 H5.3 M2.3 5.8 H5.3 M2.3 8 H5.3 M8.7 3.6 H11.7 M8.7 5.8 H11.7 M8.7 8 H11.7" stroke="#555" stroke-width="0.9"/></svg>
<div style="left:1661px;top:1016px;width:40px;height:22px;background:#C6C6C6;"></div>
<svg style="left:1674px;top:1021px;" width="14" height="13" viewBox="0 0 14 13"><rect x="0.5" y="0.5" width="13" height="12" fill="none" stroke="#444" stroke-width="1"/><path d="M2.5 3 H11.5 M2.5 5.3 H11.5 M2.5 7.6 H11.5 M2.5 9.9 H11.5" stroke="#444" stroke-width="1"/></svg>
<svg style="left:1713px;top:1020px;" width="16" height="14" viewBox="0 0 16 14"><path d="M0.5 0.5 H10.5 V5 M0.5 0.5 V11.5 H6" fill="none" stroke="#555" stroke-width="1"/><path d="M2.3 3 H8.6 M2.3 5.3 H8.6 M2.3 7.6 H6" stroke="#555" stroke-width="0.9"/><circle cx="11" cy="9.6" r="3.6" fill="none" stroke="#555" stroke-width="1.1"/><path d="M8.5 7.5 L13.5 12" stroke="#555" stroke-width="1"/></svg>
<div style="left:1746px;top:1027px;width:8px;height:1px;background:#444;"></div>
<div style="left:1760px;top:1027px;width:100px;height:1px;background:#666;"></div>
<div style="left:1797.5px;top:1021px;width:4px;height:12px;background:#444;"></div>
<div style="left:1810px;top:1024px;width:1px;height:7px;background:#666;"></div>
<div style="left:1864px;top:1027px;width:9px;height:1px;background:#444;"></div>
<div style="left:1868px;top:1023px;width:1px;height:9px;background:#444;"></div>
<div style="top:1018.00px;height:20px;line-height:20px;font-size:12px;color:#444444;white-space:pre;left:1886px;">80%</div></body></html>
